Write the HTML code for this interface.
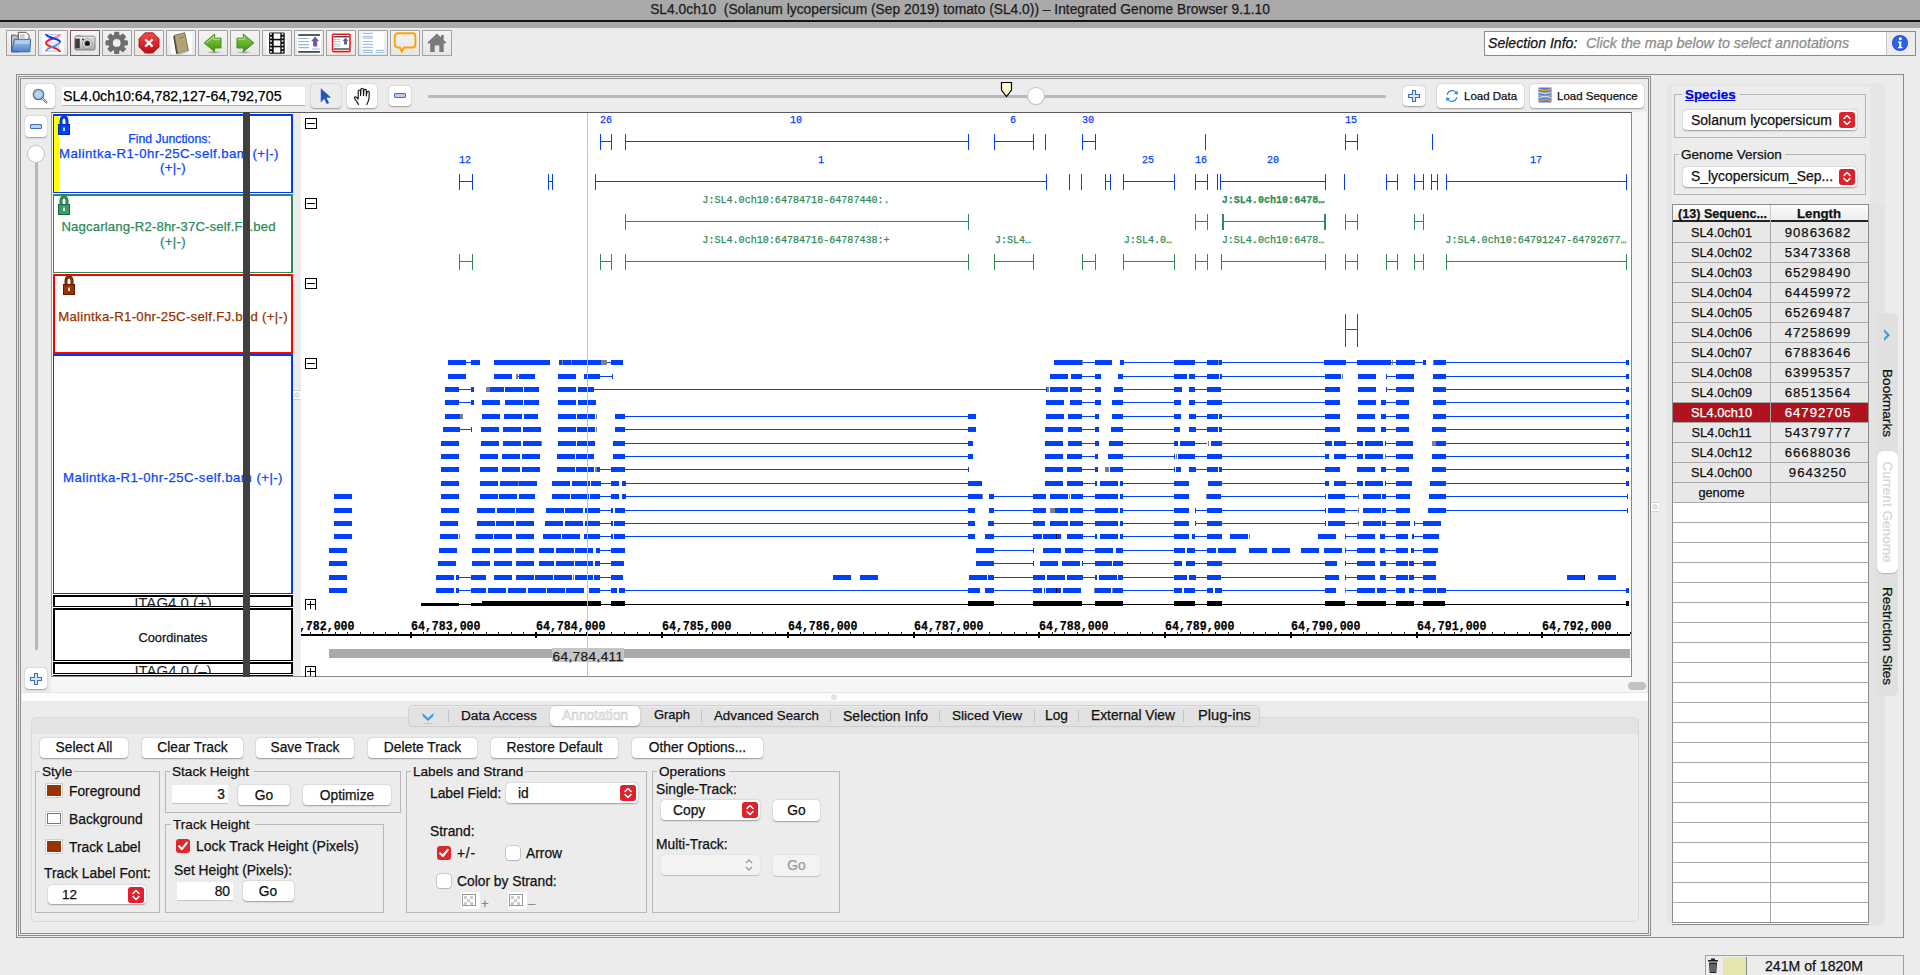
<!DOCTYPE html><html><head><meta charset="utf-8"><style>
html,body{margin:0;padding:0}
body{width:1920px;height:975px;overflow:hidden;position:relative;background:#ececec;font-family:"Liberation Sans",sans-serif}
.a{position:absolute}
.t{position:absolute;white-space:pre;-webkit-text-stroke:0.25px currentColor}
</style></head><body>
<div class="a" style="left:0px;top:0px;width:1920px;height:20px;background:#a9a9a9"></div>
<div class="a" style="left:0px;top:20px;width:1920px;height:2px;background:#121212"></div>
<div class="a" style="left:0px;top:22px;width:1920px;height:6px;background:#a9a9a9"></div>
<div class="t" style="left:960px;top:2.77px;font-size:13.8px;line-height:13.8px;color:#1c1c1c;transform:translateX(-50%);">SL4.0ch10  (Solanum lycopersicum (Sep 2019) tomato (SL4.0)) – Integrated Genome Browser 9.1.10</div>
<div class="a" style="left:6px;top:30px;width:30px;height:26px;border:1px solid #a3a3a3;box-sizing:border-box;background:linear-gradient(#f4f4f4,#e6e6e6);"></div>
<div class="a" style="left:38px;top:30px;width:30px;height:26px;border:1px solid #a3a3a3;box-sizing:border-box;background:linear-gradient(#f4f4f4,#e6e6e6);"></div>
<div class="a" style="left:70px;top:30px;width:30px;height:26px;border:1px solid #7d5c5c;box-sizing:border-box;background:linear-gradient(#f4f4f4,#e6e6e6);"></div>
<div class="a" style="left:102px;top:30px;width:30px;height:26px;border:1px solid #a3a3a3;box-sizing:border-box;background:linear-gradient(#f4f4f4,#e6e6e6);"></div>
<div class="a" style="left:134px;top:30px;width:30px;height:26px;border:1px solid #a3a3a3;box-sizing:border-box;background:linear-gradient(#f4f4f4,#e6e6e6);"></div>
<div class="a" style="left:166px;top:30px;width:30px;height:26px;border:1px solid #a3a3a3;box-sizing:border-box;background:linear-gradient(#f4f4f4,#e6e6e6);"></div>
<div class="a" style="left:198px;top:30px;width:30px;height:26px;border:1px solid #a3a3a3;box-sizing:border-box;background:linear-gradient(#f4f4f4,#e6e6e6);"></div>
<div class="a" style="left:230px;top:30px;width:30px;height:26px;border:1px solid #a3a3a3;box-sizing:border-box;background:linear-gradient(#f4f4f4,#e6e6e6);"></div>
<div class="a" style="left:262px;top:30px;width:30px;height:26px;border:1px solid #a3a3a3;box-sizing:border-box;background:linear-gradient(#f4f4f4,#e6e6e6);"></div>
<div class="a" style="left:294px;top:30px;width:30px;height:26px;border:1px solid #a3a3a3;box-sizing:border-box;background:linear-gradient(#f4f4f4,#e6e6e6);"></div>
<div class="a" style="left:326px;top:30px;width:30px;height:26px;border:1px solid #a3a3a3;box-sizing:border-box;background:linear-gradient(#f4f4f4,#e6e6e6);"></div>
<div class="a" style="left:358px;top:30px;width:30px;height:26px;border:1px solid #a3a3a3;box-sizing:border-box;background:linear-gradient(#f4f4f4,#e6e6e6);"></div>
<div class="a" style="left:390px;top:30px;width:30px;height:26px;border:1px solid #a3a3a3;box-sizing:border-box;background:linear-gradient(#f4f4f4,#e6e6e6);"></div>
<div class="a" style="left:422px;top:30px;width:30px;height:26px;border:1px solid #a3a3a3;box-sizing:border-box;background:linear-gradient(#f4f4f4,#e6e6e6);"></div>
<svg class="a" style="left:6px;top:30px" width="30" height="26" viewBox="0 0 30 26"><defs><linearGradient id="gF" x1="0" y1="0" x2="0" y2="1"><stop offset="0" stop-color="#a9c8ee"/><stop offset="1" stop-color="#4e82c6"/></linearGradient><linearGradient id="gS" x1="0" y1="0" x2="0" y2="1"><stop offset="0" stop-color="#ef4b4b"/><stop offset="1" stop-color="#c00d12"/></linearGradient><linearGradient id="gA" x1="0" y1="0" x2="0" y2="1"><stop offset="0" stop-color="#8fd14f"/><stop offset="1" stop-color="#3f9410"/></linearGradient><linearGradient id="gC" x1="0" y1="0" x2="0" y2="1"><stop offset="0" stop-color="#f2f2f2"/><stop offset="1" stop-color="#a9a9a9"/></linearGradient><radialGradient id="gSh" cx="0.5" cy="0.5" r="0.5"><stop offset="0" stop-color="rgba(0,0,0,0.35)"/><stop offset="1" stop-color="rgba(0,0,0,0)"/></radialGradient></defs><path d="M5.5 5h4l1 1h2.5v15.8h-7.5z" fill="#bdbdbd" stroke="#555" stroke-width="0.9"/><path d="M12.3 2.3h7.7l3 3v9h-10.7z" fill="#fbfbfb" stroke="#444" stroke-width="0.9"/><path d="M14.3 5.2h4.5M14.3 7.2h4.5" stroke="#8a8a8a" stroke-width="0.8"/><path d="M8.3 9.3h16.4l-0.9 12.5h-18.2z" fill="url(#gF)" stroke="#2e5e9f" stroke-width="0.9"/><path d="M9.2 10.5h14.3l-0.3 3.5h-14.4z" fill="#c4dbf5" opacity="0.6"/></svg>
<svg class="a" style="left:38px;top:30px" width="30" height="26" viewBox="0 0 30 26"><rect x="4.3" y="2.1" width="21.6" height="21.6" fill="#fff"/><path d="M9 4.5h13M9.5 8.6h12M9 13h13M9.5 17.2h12M9 21.2h13" stroke="#b8d0f2" stroke-width="1.2"/><path d="M22 4 C22 8,8 9,8 13 C8 17,22 17.5,22 22" stroke="#ff1a1a" stroke-width="2.1" fill="none"/><path d="M22 4 C22 6,18 7.5,15 8.5" stroke="#f4a0a0" stroke-width="2.1" fill="none"/><path d="M8 4 C8 8,22 8.5,22 12" stroke="#1030ff" stroke-width="2.1" fill="none"/><path d="M22 12 C22 16,8 17,8 21.5" stroke="#5f86ee" stroke-width="1.8" fill="none"/></svg>
<svg class="a" style="left:70px;top:30px" width="30" height="26" viewBox="0 0 30 26"><rect x="5.8" y="4.8" width="5" height="2" rx="0.8" fill="#bbb"/><rect x="4.8" y="6.2" width="20.2" height="13.8" rx="1.6" fill="url(#gC)" stroke="#6a6a6a" stroke-width="0.8"/><rect x="5.2" y="8.6" width="4.6" height="9.6" fill="#3e3e3e"/><circle cx="17.3" cy="13.4" r="4.8" fill="#e8e8e8" stroke="#8a8a8a" stroke-width="0.8"/><circle cx="17.3" cy="13.4" r="2.9" fill="#444"/><circle cx="17.3" cy="13.4" r="1.6" fill="#0a0a0a"/><circle cx="12.9" cy="9.4" r="0.9" fill="#222"/><rect x="20.6" y="7.8" width="3.2" height="2" fill="#bcd2ea"/></svg>
<svg class="a" style="left:102px;top:30px" width="30" height="26" viewBox="0 0 30 26"><g transform="translate(14.7 12.9)" fill="#6e6e6e"><rect x="-2.6" y="-11.2" width="5.2" height="6" rx="1.2" transform="rotate(0)"/><rect x="-2.6" y="-11.2" width="5.2" height="6" rx="1.2" transform="rotate(45)"/><rect x="-2.6" y="-11.2" width="5.2" height="6" rx="1.2" transform="rotate(90)"/><rect x="-2.6" y="-11.2" width="5.2" height="6" rx="1.2" transform="rotate(135)"/><rect x="-2.6" y="-11.2" width="5.2" height="6" rx="1.2" transform="rotate(180)"/><rect x="-2.6" y="-11.2" width="5.2" height="6" rx="1.2" transform="rotate(225)"/><rect x="-2.6" y="-11.2" width="5.2" height="6" rx="1.2" transform="rotate(270)"/><rect x="-2.6" y="-11.2" width="5.2" height="6" rx="1.2" transform="rotate(315)"/><circle r="8.4"/><circle r="3.9" fill="#efefef"/></g></svg>
<svg class="a" style="left:134px;top:30px" width="30" height="26" viewBox="0 0 30 26"><ellipse cx="15" cy="23.3" rx="7" ry="1.4" fill="url(#gSh)"/><path d="M10.9 2.8h8.2l5.9 5.9v8.2l-5.9 5.9h-8.2l-5.9-5.9v-8.2z" fill="url(#gS)" stroke="#a10a0a" stroke-width="0.8"/><path d="M11.2 9.2l7.4 7.4M18.6 9.2l-7.4 7.4" stroke="#fff" stroke-width="2.3"/></svg>
<svg class="a" style="left:166px;top:30px" width="30" height="26" viewBox="0 0 30 26"><rect x="4.6" y="2.1" width="21.3" height="21.6" fill="#fff"/><path d="M8.3 5.3l10.5-2.6 3.6 17.6-10.8 3.3z" fill="#b3a274" stroke="#5e5030" stroke-width="0.7"/><path d="M8.3 5.3l3.3 18.3-1.4 0.3-3-17.5z" fill="#4a4028"/><path d="M11.6 23.6l10.8-3.3 0.3 1.2-10.8 3.1z" fill="#eee" stroke="#777" stroke-width="0.5"/><path d="M13.5 8l4-1" stroke="#6e6040" stroke-width="0.8"/></svg>
<svg class="a" style="left:198px;top:30px" width="30" height="26" viewBox="0 0 30 26"><ellipse cx="16" cy="22.3" rx="8" ry="1.6" fill="url(#gSh)"/><path d="M6.1 12.9l10.5-8.8v4.1h6.4v9.8h-6.4v3.7z" fill="url(#gA)" stroke="#3a860c" stroke-width="0.9"/><path d="M8.2 12.9l7.4-6.2v2.6h6.4" stroke="#c6f29a" stroke-width="0.8" fill="none"/></svg>
<svg class="a" style="left:230px;top:30px" width="30" height="26" viewBox="0 0 30 26"><ellipse cx="14" cy="22.3" rx="8" ry="1.6" fill="url(#gSh)"/><path d="M23.9 12.9l-10.5-8.8v4.1h-6.4v9.8h6.4v3.7z" fill="url(#gA)" stroke="#3a860c" stroke-width="0.9"/><path d="M7.9 9.3h6.4v-2.6" stroke="#c6f29a" stroke-width="0.8" fill="none"/></svg>
<svg class="a" style="left:262px;top:30px" width="30" height="26" viewBox="0 0 30 26"><rect x="4.7" y="2.1" width="20.3" height="21.6" fill="#fff"/><rect x="7.1" y="2.4" width="15.6" height="21.3" rx="1" fill="#111"/><rect x="8.1" y="3.2" width="1.7" height="1.6" fill="#fff"/><rect x="19.7" y="3.2" width="1.7" height="1.6" fill="#fff"/><rect x="8.1" y="6.8" width="1.7" height="1.6" fill="#fff"/><rect x="19.7" y="6.8" width="1.7" height="1.6" fill="#fff"/><rect x="8.1" y="10.3" width="1.7" height="1.6" fill="#fff"/><rect x="19.7" y="10.3" width="1.7" height="1.6" fill="#fff"/><rect x="8.1" y="13.9" width="1.7" height="1.6" fill="#fff"/><rect x="19.7" y="13.9" width="1.7" height="1.6" fill="#fff"/><rect x="8.1" y="17.5" width="1.7" height="1.6" fill="#fff"/><rect x="19.7" y="17.5" width="1.7" height="1.6" fill="#fff"/><rect x="8.1" y="21.0" width="1.7" height="1.6" fill="#fff"/><rect x="19.7" y="21.0" width="1.7" height="1.6" fill="#fff"/><rect x="11.7" y="3.4" width="6.6" height="5.4" fill="#fafafa"/><rect x="11.7" y="10.4" width="6.6" height="5.4" fill="#fafafa"/><rect x="11.7" y="17.3" width="6.6" height="5.4" fill="#fafafa"/></svg>
<svg class="a" style="left:294px;top:30px" width="30" height="26" viewBox="0 0 30 26"><rect x="3" y="2.1" width="24" height="21.6" fill="#fff"/><rect x="4.2" y="4.1" width="21.7" height="1.8" fill="#4a4a4a"/><rect x="4.2" y="21" width="21.7" height="1.8" fill="#4a4a4a"/><path d="M4.2 8.5h10.8M4.2 11.5h10.8M4.2 14.6h10.8M4.2 17.6h10.8" stroke="#8fb4e0" stroke-width="1.1"/><path d="M21.1 6.4l4.1 4.8h-2v5.2h-4.1v-5.2h-2z" fill="#6f5aa0"/><rect x="17.8" y="18" width="8.1" height="2" fill="#c6dbf3"/></svg>
<svg class="a" style="left:326px;top:30px" width="30" height="26" viewBox="0 0 30 26"><rect x="4.5" y="2.1" width="22" height="21.6" fill="#fff"/><rect x="6.5" y="4.2" width="17.5" height="17.4" rx="1" fill="#fff" stroke="#ff1010" stroke-width="1.6"/><rect x="7.5" y="6" width="15.5" height="1.4" fill="#3e4a4e"/><rect x="7.5" y="18.3" width="15.5" height="1.4" fill="#3e4a4e"/><path d="M7.5 9.5h7M7.5 11.5h7M7.5 14h7M7.5 16h7" stroke="#a8c6ea" stroke-width="1.1"/><path d="M19.5 7.6l3 3.3h-1.5v3.6h-3v-3.6h-1.5z" fill="#6f5aa0"/></svg>
<svg class="a" style="left:358px;top:30px" width="30" height="26" viewBox="0 0 30 26"><rect x="3.5" y="2.1" width="22.4" height="21.6" fill="#fff"/><path d="M4.5 3.4h10.5M4.5 6.5h10.5M4.5 8.2h10.5M4.5 11.5h10.5M4.5 14.3h10.5M4.5 17.3h10.5M4.5 20.3h10.5M4.5 22.4h10.5M17.7 20.3h8.2M17.7 22.4h8.2" stroke="#a5c3e8" stroke-width="1.2"/></svg>
<svg class="a" style="left:390px;top:30px" width="30" height="26" viewBox="0 0 30 26"><path d="M7.6 3.3h15a2.8 2.8 0 0 1 2.8 2.8v8.6a2.8 2.8 0 0 1-2.8 2.8h-8.6l-2.4 4.3-1.5-4.3h-2.5a2.8 2.8 0 0 1-2.8-2.8v-8.6a2.8 2.8 0 0 1 2.8-2.8z" fill="none" stroke="#ffa200" stroke-width="1.9" stroke-linejoin="round"/></svg>
<svg class="a" style="left:422px;top:30px" width="30" height="26" viewBox="0 0 30 26"><path d="M14.9 3.6l9.4 8.9-1.5 1.4-7.9-7.4-7.9 7.4-1.5-1.4z" fill="#777"/><rect x="19.1" y="5" width="2.6" height="4.5" fill="#777"/><path d="M8.2 12.6l6.7-6.3 6.8 6.3v9.4h-4.4v-6.6h-4.6v6.6h-4.5z" fill="#7a7a7a"/></svg>
<div class="a" style="left:1484px;top:31px;width:432px;height:25px;border:1px solid #8a8a8a;box-sizing:border-box;background:#fff"></div>
<div class="a" style="left:1886px;top:32px;width:29px;height:23px;background:#ececec;border-left:1px solid #c8c8c8;box-sizing:border-box"></div>
<div class="t" style="left:1488px;top:36.02px;font-size:14.1px;line-height:14.1px;color:#111;font-style:italic;">Selection Info:</div>
<div class="t" style="left:1586px;top:35.84px;font-size:14.3px;line-height:14.3px;color:#8c8c8c;font-style:italic;">Click the map below to select annotations</div>
<svg class="a" style="left:1891px;top:34px" width="18" height="18" viewBox="0 0 18 18"><circle cx="9" cy="9" r="8" fill="#1b4fd1"/><circle cx="9" cy="9" r="7" fill="#2a62e8"/><circle cx="9.3" cy="4.8" r="1.5" fill="#fff"/><path d="M7 7.5h3.3v5.5h1.2v1.3h-4.5v-1.3h1.2v-4.2h-1.2z" fill="#fff"/></svg>
<div class="a" style="left:16px;top:74px;width:1888px;height:864px;border:1px solid #8c8c8c;box-sizing:border-box"></div>
<div class="a" style="left:18px;top:76px;width:1633px;height:860px;border:1px solid #8c8c8c;box-sizing:border-box"></div>
<div class="a" style="left:20px;top:78px;width:1629px;height:856px;border:1px solid #8c8c8c;box-sizing:border-box"></div>
<div class="a" style="left:25px;top:84px;width:30px;height:24px;background:#fff;border-radius:4px;box-shadow:0 0.5px 1.5px rgba(0,0,0,0.35);"></div>
<svg class="a" style="left:31px;top:87px" width="18" height="18" viewBox="0 0 18 18"><circle cx="7.5" cy="7.5" r="5.3" fill="#b9d3f2" stroke="#666" stroke-width="1.1"/><circle cx="7.5" cy="7.5" r="4" fill="none" stroke="#7aa7e0" stroke-width="0.8"/><path d="M11.3 11.3l4 4" stroke="#666" stroke-width="2.2" stroke-linecap="round"/><path d="M11.3 11.3l4 4" stroke="#eee" stroke-width="1" stroke-linecap="round"/></svg>
<div class="a" style="left:62px;top:87px;width:243px;height:19px;background:#fff;border-bottom:1px solid #b0b0b0;box-sizing:border-box"></div>
<div class="t" style="left:63px;top:88.93px;font-size:14.2px;line-height:14.2px;color:#000;">SL4.0ch10:64,782,127-64,792,705</div>
<div class="a" style="left:311px;top:84px;width:30px;height:24px;background:#ececec;border-radius:4px;box-shadow:0 0.5px 1.5px rgba(0,0,0,0.35);"></div>
<svg class="a" style="left:318px;top:87px" width="16" height="18" viewBox="0 0 16 18"><path d="M3 1.5v13.5l3.2-3.3 2.6 5.3 2.3-1.1-2.6-5.2 4.5-0.1z" fill="#2452b5"/><path d="M3 1.5v13.5l3.2-3.3" fill="none" stroke="#4a7ad8" stroke-width="0.6"/></svg>
<div class="a" style="left:347px;top:84px;width:30px;height:24px;background:#fff;border-radius:4px;box-shadow:0 0.5px 1.5px rgba(0,0,0,0.35);"></div>
<svg class="a" style="left:353px;top:86px" width="18" height="20" viewBox="0 0 18 20"><path d="M5.5 18.5 C4.5 16.5,2.5 14,1.6 12.2 C1.1 11,2.3 10.3,3.3 11.2 L5.2 13 L5.2 5.2 C5.2 3.6,7.6 3.6,7.6 5.2 L7.6 9.5 L7.9 3.4 C7.9 1.8,10.4 1.8,10.4 3.4 L10.5 9.5 L10.9 4.5 C11 2.9,13.4 3,13.3 4.6 L13.3 10 L13.9 6.4 C14.1 4.9,16.4 5.1,16.3 6.6 L16 12.5 C15.8 15,14.8 16.8,13.8 18.5" fill="#fff" stroke="#111" stroke-width="1.15" stroke-linecap="round" stroke-linejoin="round"/></svg>
<div class="a" style="left:389px;top:86px;width:22px;height:20px;background:#fff;border-radius:4px;box-shadow:0 0.5px 1.5px rgba(0,0,0,0.35);"></div>
<div class="a" style="left:394px;top:93px;width:12px;height:5px;background:#b9d0ee;border:1px solid #3d6cb8;box-sizing:border-box;border-radius:1px"></div>
<div class="a" style="left:428px;top:95px;width:958px;height:3px;background:#b8b8b8;border-radius:1.5px"></div>
<svg class="a" style="left:1000px;top:81px" width="14" height="17" viewBox="0 0 14 17"><path d="M1.5 1.5h10v7.5l-5 6.5-5-6.5z" fill="#fdf8cf" stroke="#000" stroke-width="1.2"/></svg>
<div class="a" style="left:1028px;top:88px;width:16px;height:16px;background:#fff;border-radius:50%;box-shadow:0 0 0 1px #c4c4c4, 0 1px 1px rgba(0,0,0,0.15)"></div>
<div class="a" style="left:1403px;top:86px;width:22px;height:20px;background:#fff;border-radius:4px;box-shadow:0 0.5px 1.5px rgba(0,0,0,0.35);"></div>
<svg class="a" style="left:1407px;top:89px" width="14" height="14" viewBox="0 0 14 14"><path d="M5.5 1.5h3v4h4v3h-4v4h-3v-4h-4v-3h4z" fill="#dce8f7" stroke="#3d6cb8" stroke-width="1.1"/></svg>
<div class="a" style="left:1437px;top:84px;width:87px;height:24px;background:#fff;border-radius:4px;box-shadow:0 0.5px 1.5px rgba(0,0,0,0.35);"></div>
<svg class="a" style="left:1445px;top:88px" width="14" height="16" viewBox="0 0 14 16"><path d="M3 7 C3 3.5,8 2,10.5 4.5 L9 6 L13 6.5 L12.5 2.5 L11.3 3.7 C8 0.5,2 2,1.8 7z" fill="#2f8ad8"/><path d="M11 9 C11 12.5,6 14,3.5 11.5 L5 10 L1 9.5 L1.5 13.5 L2.7 12.3 C6 15.5,12 14,12.2 9z" fill="#2f8ad8"/></svg>
<div class="t" style="left:1464px;top:91.22px;font-size:11.5px;line-height:11.5px;color:#111;">Load Data</div>
<div class="a" style="left:1530px;top:84px;width:114px;height:24px;background:#fff;border-radius:4px;box-shadow:0 0.5px 1.5px rgba(0,0,0,0.35);"></div>
<svg class="a" style="left:1538px;top:87px" width="14" height="16" viewBox="0 0 14 16"><rect x="0.5" y="0.5" width="13" height="15" fill="#4c7fd0"/><path d="M1 2 C5 4,9 4,13 2 M1 8 C5 10,9 10,13 8 M1 14 C5 12,9 12,13 14" stroke="#f39a1c" stroke-width="1.6" fill="none"/><path d="M1 5 C5 7,9 7,13 5 M1 11 C5 9,9 9,13 11" stroke="#cfe0f7" stroke-width="1.3" fill="none"/></svg>
<div class="t" style="left:1557px;top:91.22px;font-size:11.5px;line-height:11.5px;color:#111;">Load Sequence</div>
<div class="a" style="left:25px;top:116px;width:22px;height:21px;background:#fff;border-radius:4px;box-shadow:0 0.5px 1.5px rgba(0,0,0,0.35);"></div>
<div class="a" style="left:30px;top:124px;width:12px;height:5px;background:#b9d0ee;border:1px solid #3d6cb8;box-sizing:border-box;border-radius:1px"></div>
<div class="a" style="left:35px;top:160px;width:3px;height:490px;background:#b8b8b8;border-radius:1px"></div>
<div class="a" style="left:28px;top:146px;width:16px;height:16px;background:#fff;border-radius:50%;box-shadow:0 0 0 1px #c4c4c4"></div>
<div class="a" style="left:25px;top:668px;width:22px;height:21px;background:#fff;border-radius:4px;box-shadow:0 0.5px 1.5px rgba(0,0,0,0.35);"></div>
<svg class="a" style="left:29px;top:672px" width="14" height="14" viewBox="0 0 14 14"><path d="M5.5 1.5h3v4h4v3h-4v4h-3v-4h-4v-3h4z" fill="#dce8f7" stroke="#3d6cb8" stroke-width="1.1"/></svg>
<div class="a" style="left:51px;top:112px;width:1581px;height:565px;background:#fff;border-top:1px solid #5c5c5c;border-left:1px solid #9a9a9a;border-right:1px solid #8a8a8a;border-bottom:1px solid #8a8a8a;box-sizing:border-box"></div>
<svg class="a" style="left:301px;top:113px" width="1330" height="563" viewBox="301 113 1330 563" shape-rendering="crispEdges"><path d="M600 134h1v16h-1zM611 134h1v16h-1zM600 141h11v1h-11zM625 134h1v16h-1zM968 134h1v16h-1zM625 141h343v1h-343zM994 134h1v16h-1zM1033 134h1v16h-1zM994 141h39v1h-39zM1045 134h1v16h-1zM1082 134h1v16h-1zM1095 134h1v16h-1zM1082 141h13v1h-13zM1205 134h1v16h-1zM1345 134h1v16h-1zM1357 134h1v16h-1zM1345 141h12v1h-12zM1432 134h1v16h-1zM459 174h1v16h-1zM472 174h1v16h-1zM459 181h13v1h-13zM548 174h1v16h-1zM552 174h1v16h-1zM548 181h4v1h-4zM595 174h1v16h-1zM1046 174h1v16h-1zM595 181h451v1h-451zM1069 174h1v16h-1zM1081 174h1v16h-1zM1105 174h1v16h-1zM1110 174h1v16h-1zM1105 181h5v1h-5zM1123 174h1v16h-1zM1174 174h1v16h-1zM1123 181h51v1h-51zM1195 174h1v16h-1zM1207 174h1v16h-1zM1195 181h12v1h-12zM1217 174h1v16h-1zM1220 174h1v16h-1zM1325 174h1v16h-1zM1220 181h105v1h-105zM1344 174h1v16h-1zM1386 174h1v16h-1zM1397 174h1v16h-1zM1386 181h11v1h-11zM1414 174h1v16h-1zM1423 174h1v16h-1zM1414 181h9v1h-9zM1431 174h1v16h-1zM1437 174h1v16h-1zM1431 181h6v1h-6zM1446 174h1v16h-1zM1626 174h1v16h-1zM1446 181h180v1h-180z" fill="#0040ff"/><path d="M625 214h1v16h-1zM968 214h1v16h-1zM625 221h343v1h-343zM1195 214h1v16h-1zM1207 214h1v16h-1zM1195 221h12v1h-12zM1414 214h1v16h-1zM1423 214h1v16h-1zM1414 221h9v1h-9zM1345 214h1v16h-1zM1357 214h1v16h-1zM1345 221h12v1h-12zM459 254h1v16h-1zM472 254h1v16h-1zM459 261h13v1h-13zM600 254h1v16h-1zM611 254h1v16h-1zM600 261h11v1h-11zM625 254h1v16h-1zM968 254h1v16h-1zM625 261h343v1h-343zM994 254h1v16h-1zM1033 254h1v16h-1zM994 261h39v1h-39zM1082 254h1v16h-1zM1095 254h1v16h-1zM1082 261h13v1h-13zM1123 254h1v16h-1zM1174 254h1v16h-1zM1123 261h51v1h-51zM1195 254h1v16h-1zM1207 254h1v16h-1zM1195 261h12v1h-12zM1221 254h1v16h-1zM1325 254h1v16h-1zM1221 261h104v1h-104zM1345 254h1v16h-1zM1357 254h1v16h-1zM1345 261h12v1h-12zM1386 254h1v16h-1zM1397 254h1v16h-1zM1386 261h11v1h-11zM1414 254h1v16h-1zM1423 254h1v16h-1zM1414 261h9v1h-9zM1446 254h1v16h-1zM1626 254h1v16h-1zM1446 261h180v1h-180zM1222 214h2v16h-2zM1324 214h2v16h-2zM1222 221h103v1h-103z" fill="#2e8b57"/><path d="M1345 314h1v33h-1zM1357 314h1v33h-1zM1345 329h12v1h-12z" fill="#993300"/><path d="M448 360h18v5h-18zM466 362h5v1h-5zM471 360h9v5h-9zM494 360h56v5h-56zM559 360h42v5h-42zM607 362h4v1h-4zM611 360h12v5h-12zM1054 360h28v5h-28zM1082 362h13v1h-13zM1095 360h17v5h-17zM1120 360h4v5h-4zM1124 362h50v1h-50zM1174 360h21v5h-21zM1195 362h12v1h-12zM1207 360h15v5h-15zM1222 362h102v1h-102zM1324 360h22v5h-22zM1346 362h11v1h-11zM1357 360h34v5h-34zM1391 362h5v1h-5zM1396 360h19v5h-19zM1415 362h8v1h-8zM1423 360h3v5h-3zM1433 360h13v5h-13zM1446 362h180v1h-180zM1626 360h3v5h-3z" fill="#0040ff"/>
<path d="M601 360h6v5h-6zM562 360h1v5h-1zM571 360h1v5h-1zM1082 360h1v5h-1zM1218 360h1v5h-1zM1392 360h1v5h-1zM1433 360h1v5h-1z" fill="#808080"/>
<path d="M448 374h18v5h-18zM494 374h18v5h-18zM518 376h1v1h-1zM519 374h16v5h-16zM558 374h18v5h-18zM584 374h16v5h-16zM600 376h12v1h-12zM612 374h1v5h-1zM1050 374h18v5h-18zM1071 374h11v5h-11zM1082 376h13v1h-13zM1095 374h6v5h-6zM1118 374h5v5h-5zM1123 376h51v1h-51zM1174 374h13v5h-13zM1189 374h6v5h-6zM1195 376h12v1h-12zM1207 374h12v5h-12zM1220 374h2v5h-2zM1222 376h103v1h-103zM1325 374h16v5h-16zM1358 374h18v5h-18zM1386 374h1v5h-1zM1386 376h10v1h-10zM1396 374h18v5h-18zM1433 374h13v5h-13zM1446 376h180v1h-180zM1626 374h3v5h-3z" fill="#0040ff"/>
<path d="M516 374h2v5h-2zM1342 374h1v5h-1z" fill="#808080"/>
<path d="M445 387h14v5h-14zM459 389h12v1h-12zM471 387h3v5h-3zM490 387h14v5h-14zM505 387h18v5h-18zM524 387h15v5h-15zM558 387h18v5h-18zM578 387h16v5h-16zM594 389h452v1h-452zM1046 387h1v5h-1zM1050 387h18v5h-18zM1070 387h12v5h-12zM1082 389h13v1h-13zM1095 387h6v5h-6zM1114 387h9v5h-9zM1123 389h51v1h-51zM1174 387h8v5h-8zM1189 387h6v5h-6zM1195 389h12v1h-12zM1207 387h14v5h-14zM1221 389h104v1h-104zM1325 387h15v5h-15zM1358 387h18v5h-18zM1386 387h1v5h-1zM1386 389h10v1h-10zM1396 387h18v5h-18zM1433 387h13v5h-13zM1446 389h180v1h-180zM1626 387h3v5h-3z" fill="#0040ff"/>
<path d="M486 387h4v5h-4zM1047 387h1v5h-1zM1048 387h1v5h-1z" fill="#808080"/>
<path d="M445 400h14v5h-14zM459 402h12v1h-12zM471 400h3v5h-3zM482 400h18v5h-18zM505 400h18v5h-18zM524 400h15v5h-15zM558 400h18v5h-18zM578 400h18v5h-18zM1046 400h18v5h-18zM1070 400h12v5h-12zM1082 402h13v1h-13zM1095 400h6v5h-6zM1112 400h11v5h-11zM1123 402h51v1h-51zM1174 400h7v5h-7zM1189 400h6v5h-6zM1195 402h12v1h-12zM1207 400h15v5h-15zM1222 402h103v1h-103zM1325 400h15v5h-15zM1358 400h18v5h-18zM1381 400h5v5h-5zM1386 402h10v1h-10zM1396 400h13v5h-13zM1433 400h13v5h-13zM1446 402h180v1h-180zM1626 400h3v5h-3z" fill="#0040ff"/>
<path d="M445 414h15v5h-15zM482 414h18v5h-18zM504 414h18v5h-18zM524 414h14v5h-14zM558 414h18v5h-18zM577 414h18v5h-18zM615 414h10v5h-10zM625 416h343v1h-343zM968 414h8v5h-8zM1046 414h18v5h-18zM1068 414h14v5h-14zM1082 416h13v1h-13zM1095 414h4v5h-4zM1112 414h11v5h-11zM1123 416h51v1h-51zM1174 414h7v5h-7zM1189 414h7v5h-7zM1196 416h11v1h-11zM1207 414h11v5h-11zM1219 414h3v5h-3zM1222 416h103v1h-103zM1325 414h15v5h-15zM1357 414h18v5h-18zM1381 414h5v5h-5zM1386 416h10v1h-10zM1396 414h13v5h-13zM1433 414h13v5h-13zM1446 416h180v1h-180zM1626 414h3v5h-3z" fill="#0040ff"/>
<path d="M460 414h3v5h-3zM596 414h1v5h-1z" fill="#808080"/>
<path d="M443 427h17v5h-17zM460 429h11v1h-11zM471 427h1v5h-1zM481 427h18v5h-18zM503 427h18v5h-18zM523 427h18v5h-18zM558 427h18v5h-18zM577 427h18v5h-18zM615 427h10v5h-10zM625 429h343v1h-343zM968 427h8v5h-8zM1045 427h18v5h-18zM1068 427h14v5h-14zM1082 429h13v1h-13zM1095 427h4v5h-4zM1111 427h12v5h-12zM1123 429h51v1h-51zM1174 427h6v5h-6zM1189 427h7v5h-7zM1196 429h11v1h-11zM1207 427h11v5h-11zM1219 427h3v5h-3zM1222 429h103v1h-103zM1325 427h15v5h-15zM1357 427h18v5h-18zM1381 427h5v5h-5zM1386 429h10v1h-10zM1396 427h13v5h-13zM1432 427h14v5h-14zM1446 429h180v1h-180zM1626 427h3v5h-3z" fill="#0040ff"/>
<path d="M596 427h1v5h-1z" fill="#808080"/>
<path d="M441 441h18v5h-18zM481 441h18v5h-18zM503 441h18v5h-18zM523 441h18v5h-18zM558 441h18v5h-18zM577 441h18v5h-18zM613 441h12v5h-12zM625 443h343v1h-343zM968 441h5v5h-5zM1045 441h18v5h-18zM1068 441h14v5h-14zM1082 443h13v1h-13zM1095 441h4v5h-4zM1109 441h14v5h-14zM1123 443h51v1h-51zM1174 441h4v5h-4zM1180 441h15v5h-15zM1195 443h12v1h-12zM1211 441h11v5h-11zM1222 443h103v1h-103zM1325 441h7v5h-7zM1334 441h12v5h-12zM1346 443h11v1h-11zM1357 441h6v5h-6zM1365 441h18v5h-18zM1385 441h1v5h-1zM1385 443h11v1h-11zM1396 441h17v5h-17zM1436 441h10v5h-10zM1446 443h180v1h-180zM1626 441h3v5h-3z" fill="#0040ff"/>
<path d="M541 441h1v5h-1zM1208 441h1v5h-1zM1432 441h4v5h-4z" fill="#808080"/>
<path d="M441 454h18v5h-18zM480 454h18v5h-18zM502 454h18v5h-18zM522 454h18v5h-18zM557 454h18v5h-18zM576 454h18v5h-18zM613 454h12v5h-12zM625 456h343v1h-343zM968 454h5v5h-5zM1045 454h18v5h-18zM1067 454h15v5h-15zM1082 456h13v1h-13zM1095 454h3v5h-3zM1108 454h15v5h-15zM1123 456h51v1h-51zM1174 454h1v5h-1zM1178 454h17v5h-17zM1195 456h12v1h-12zM1207 454h15v5h-15zM1222 456h103v1h-103zM1325 454h4v5h-4zM1334 454h12v5h-12zM1346 456h11v1h-11zM1357 454h6v5h-6zM1365 454h18v5h-18zM1385 456h11v1h-11zM1396 454h17v5h-17zM1432 454h14v5h-14zM1446 456h180v1h-180zM1626 454h3v5h-3z" fill="#0040ff"/>
<path d="M1176 454h1v5h-1zM1385 454h1v5h-1z" fill="#808080"/>
<path d="M441 467h18v5h-18zM480 467h18v5h-18zM502 467h18v5h-18zM522 467h18v5h-18zM557 467h18v5h-18zM576 467h18v5h-18zM597 467h3v5h-3zM600 469h11v1h-11zM611 467h14v5h-14zM625 469h343v1h-343zM968 467h1v5h-1zM1045 467h18v5h-18zM1067 467h15v5h-15zM1082 469h13v1h-13zM1095 467h3v5h-3zM1110 467h13v5h-13zM1123 469h51v1h-51zM1174 467h1v5h-1zM1176 467h5v5h-5zM1189 467h7v5h-7zM1196 469h11v1h-11zM1207 467h11v5h-11zM1219 467h3v5h-3zM1222 469h103v1h-103zM1325 467h15v5h-15zM1357 467h18v5h-18zM1381 467h5v5h-5zM1386 469h10v1h-10zM1396 467h13v5h-13zM1432 467h14v5h-14zM1446 469h180v1h-180zM1626 467h3v5h-3z" fill="#0040ff"/>
<path d="M595 467h1v5h-1zM596 467h1v5h-1zM1105 467h4v5h-4z" fill="#808080"/>
<path d="M441 481h18v5h-18zM480 481h18v5h-18zM500 481h37v5h-37zM552 481h18v5h-18zM572 481h18v5h-18zM591 481h10v5h-10zM601 483h10v1h-10zM611 481h8v5h-8zM622 481h4v5h-4zM626 483h342v1h-342zM968 481h14v5h-14zM1045 481h18v5h-18zM1067 481h16v5h-16zM1083 483h12v1h-12zM1095 481h2v5h-2zM1100 481h18v5h-18zM1120 481h3v5h-3zM1123 483h51v1h-51zM1174 481h15v5h-15zM1208 481h14v5h-14zM1222 483h103v1h-103zM1325 481h4v5h-4zM1334 481h12v5h-12zM1346 483h11v1h-11zM1357 481h6v5h-6zM1365 481h18v5h-18zM1385 481h1v5h-1zM1385 483h11v1h-11zM1396 481h16v5h-16zM1430 481h16v5h-16zM1446 483h180v1h-180zM1626 481h3v5h-3z" fill="#0040ff"/>
<path d="M518 481h1v5h-1z" fill="#808080"/>
<path d="M334 494h18v5h-18zM441 494h18v5h-18zM480 494h18v5h-18zM499 494h18v5h-18zM519 494h16v5h-16zM552 494h18v5h-18zM571 494h18v5h-18zM590 494h10v5h-10zM600 496h11v1h-11zM611 494h8v5h-8zM622 494h4v5h-4zM626 496h342v1h-342zM968 494h14v5h-14zM989 494h5v5h-5zM994 496h39v1h-39zM1033 494h13v5h-13zM1050 494h18v5h-18zM1071 494h12v5h-12zM1083 496h12v1h-12zM1095 494h23v5h-23zM1120 494h3v5h-3zM1123 496h51v1h-51zM1174 494h15v5h-15zM1207 494h14v5h-14zM1221 496h104v1h-104zM1325 494h1v5h-1zM1328 494h17v5h-17zM1345 496h13v1h-13zM1363 494h18v5h-18zM1382 494h4v5h-4zM1386 496h10v1h-10zM1396 494h14v5h-14zM1429 494h17v5h-17zM1446 496h181v1h-181zM1627 494h1v5h-1z" fill="#0040ff"/>
<path d="M982 494h1v5h-1zM1069 494h1v5h-1zM1206 494h1v5h-1zM1358 494h1v5h-1z" fill="#808080"/>
<path d="M334 508h18v5h-18zM441 508h18v5h-18zM477 508h18v5h-18zM497 508h18v5h-18zM516 508h18v5h-18zM546 508h18v5h-18zM565 508h18v5h-18zM585 508h15v5h-15zM600 510h11v1h-11zM611 508h2v5h-2zM615 508h10v5h-10zM625 510h343v1h-343zM968 508h7v5h-7zM989 508h5v5h-5zM994 510h39v1h-39zM1033 508h13v5h-13zM1055 508h13v5h-13zM1070 508h13v5h-13zM1083 510h12v1h-12zM1095 508h23v5h-23zM1120 508h3v5h-3zM1123 510h51v1h-51zM1174 508h15v5h-15zM1195 508h1v5h-1zM1195 510h12v1h-12zM1207 508h15v5h-15zM1222 510h103v1h-103zM1325 508h1v5h-1zM1328 508h17v5h-17zM1345 510h13v1h-13zM1363 508h18v5h-18zM1382 508h4v5h-4zM1386 510h10v1h-10zM1396 508h14v5h-14zM1428 508h18v5h-18zM1446 510h181v1h-181zM1627 508h1v5h-1z" fill="#0040ff"/>
<path d="M1050 508h5v5h-5zM1358 508h1v5h-1z" fill="#808080"/>
<path d="M334 521h18v5h-18zM440 521h18v5h-18zM477 521h18v5h-18zM496 521h18v5h-18zM516 521h18v5h-18zM545 521h18v5h-18zM565 521h18v5h-18zM585 521h15v5h-15zM600 523h11v1h-11zM611 521h2v5h-2zM614 521h11v5h-11zM625 523h343v1h-343zM968 521h7v5h-7zM988 521h6v5h-6zM994 523h39v1h-39zM1033 521h12v5h-12zM1050 521h18v5h-18zM1070 521h13v5h-13zM1083 523h12v1h-12zM1095 521h23v5h-23zM1120 521h3v5h-3zM1123 523h51v1h-51zM1174 521h15v5h-15zM1195 521h1v5h-1zM1195 523h12v1h-12zM1207 521h15v5h-15zM1222 523h103v1h-103zM1325 521h1v5h-1zM1328 521h17v5h-17zM1345 523h13v1h-13zM1363 521h18v5h-18zM1382 521h4v5h-4zM1386 523h10v1h-10zM1396 521h14v5h-14zM1414 521h1v5h-1zM1414 523h9v1h-9zM1423 521h18v5h-18z" fill="#0040ff"/>
<path d="M1358 521h1v5h-1z" fill="#808080"/>
<path d="M334 534h18v5h-18zM440 534h18v5h-18zM476 534h17v5h-17zM494 534h18v5h-18zM516 534h18v5h-18zM543 534h18v5h-18zM562 534h18v5h-18zM584 534h16v5h-16zM600 536h11v1h-11zM611 534h2v5h-2zM614 534h11v5h-11zM625 536h343v1h-343zM968 534h7v5h-7zM985 534h9v5h-9zM994 536h39v1h-39zM1033 534h9v5h-9zM1043 534h18v5h-18zM1067 534h16v5h-16zM1083 536h12v1h-12zM1095 534h2v5h-2zM1100 534h18v5h-18zM1120 534h3v5h-3zM1123 536h51v1h-51zM1174 534h15v5h-15zM1192 534h3v5h-3zM1195 536h12v1h-12zM1207 534h15v5h-15zM1230 534h18v5h-18zM1318 534h18v5h-18zM1345 534h1v5h-1zM1345 536h12v1h-12zM1357 534h18v5h-18zM1380 534h5v5h-5zM1385 536h11v1h-11zM1396 534h12v5h-12zM1412 534h2v5h-2zM1414 536h9v1h-9zM1423 534h16v5h-16z" fill="#0040ff"/>
<path d="M459 534h1v5h-1zM475 534h1v5h-1zM1249 534h1v5h-1z" fill="#808080"/>
<path d="M1056 534h1v5h-1z" fill="#000"/>
<path d="M329 548h18v5h-18zM439 548h18v5h-18zM472 548h18v5h-18zM494 548h18v5h-18zM516 548h18v5h-18zM539 548h15v5h-15zM556 548h18v5h-18zM575 548h18v5h-18zM596 548h4v5h-4zM600 550h11v1h-11zM611 548h14v5h-14zM976 548h18v5h-18zM994 550h39v1h-39zM1033 548h1v5h-1zM1043 548h18v5h-18zM1065 548h18v5h-18zM1083 550h12v1h-12zM1095 548h18v5h-18zM1116 548h7v5h-7zM1123 550h51v1h-51zM1174 548h11v5h-11zM1187 548h8v5h-8zM1195 550h12v1h-12zM1207 548h9v5h-9zM1218 548h18v5h-18zM1249 548h18v5h-18zM1272 548h18v5h-18zM1301 548h18v5h-18zM1324 548h18v5h-18zM1345 548h1v5h-1zM1345 550h12v1h-12zM1357 548h18v5h-18zM1380 548h5v5h-5zM1385 550h11v1h-11zM1396 548h12v5h-12zM1411 548h3v5h-3zM1414 550h9v1h-9zM1423 548h15v5h-15z" fill="#0040ff"/>
<path d="M329 561h18v5h-18zM438 561h18v5h-18zM472 561h18v5h-18zM494 561h18v5h-18zM516 561h18v5h-18zM539 561h15v5h-15zM556 561h18v5h-18zM575 561h18v5h-18zM595 561h5v5h-5zM600 563h11v1h-11zM611 561h13v5h-13zM976 561h18v5h-18zM994 563h39v1h-39zM1033 561h1v5h-1zM1040 561h18v5h-18zM1062 561h18v5h-18zM1082 561h1v5h-1zM1082 563h13v1h-13zM1095 561h17v5h-17zM1113 561h10v5h-10zM1123 563h51v1h-51zM1174 561h8v5h-8zM1186 561h9v5h-9zM1195 563h12v1h-12zM1207 561h15v5h-15zM1222 563h103v1h-103zM1325 561h12v5h-12zM1345 561h1v5h-1zM1345 563h12v1h-12zM1357 561h18v5h-18zM1380 561h6v5h-6zM1386 563h10v1h-10zM1396 561h12v5h-12zM1409 561h5v5h-5zM1414 563h9v1h-9zM1423 561h13v5h-13z" fill="#0040ff"/>
<path d="M329 575h18v5h-18zM436 575h18v5h-18zM456 575h3v5h-3zM459 577h12v1h-12zM471 575h15v5h-15zM494 575h18v5h-18zM516 575h18v5h-18zM535 575h18v5h-18zM554 575h18v5h-18zM575 575h18v5h-18zM594 575h6v5h-6zM600 577h11v1h-11zM611 575h12v5h-12zM833 575h18v5h-18zM860 575h18v5h-18zM969 575h18v5h-18zM988 575h6v5h-6zM994 577h39v1h-39zM1033 575h12v5h-12zM1047 575h18v5h-18zM1067 575h16v5h-16zM1083 577h12v1h-12zM1095 575h2v5h-2zM1099 575h18v5h-18zM1118 575h5v5h-5zM1123 577h51v1h-51zM1174 575h13v5h-13zM1189 575h7v5h-7zM1196 577h11v1h-11zM1207 575h14v5h-14zM1221 577h104v1h-104zM1325 575h14v5h-14zM1345 575h1v5h-1zM1345 577h12v1h-12zM1357 575h18v5h-18zM1380 575h6v5h-6zM1386 577h10v1h-10zM1396 575h12v5h-12zM1409 575h5v5h-5zM1414 577h9v1h-9zM1423 575h13v5h-13zM1567 575h18v5h-18zM1598 575h18v5h-18z" fill="#0040ff"/>
<path d="M573 575h1v5h-1z" fill="#808080"/>
<path d="M1584 575h1v5h-1z" fill="#000"/>
<path d="M329 588h18v5h-18zM436 588h18v5h-18zM456 588h3v5h-3zM459 590h12v1h-12zM471 588h15v5h-15zM488 588h18v5h-18zM508 588h18v5h-18zM528 588h18v5h-18zM547 588h18v5h-18zM566 588h18v5h-18zM589 588h11v5h-11zM600 590h11v1h-11zM611 588h6v5h-6zM619 588h6v5h-6zM625 590h343v1h-343zM968 588h12v5h-12zM985 588h9v5h-9zM994 590h39v1h-39zM1033 588h9v5h-9zM1044 588h1v5h-1zM1046 588h15v5h-15zM1063 588h18v5h-18zM1095 588h16v5h-16zM1113 588h10v5h-10zM1123 590h51v1h-51zM1174 588h8v5h-8zM1184 588h11v5h-11zM1195 590h12v1h-12zM1207 588h6v5h-6zM1215 588h7v5h-7zM1222 590h103v1h-103zM1325 588h11v5h-11zM1345 590h12v1h-12zM1357 588h18v5h-18zM1377 588h9v5h-9zM1386 590h10v1h-10zM1396 588h9v5h-9zM1409 588h5v5h-5zM1414 590h9v1h-9zM1423 588h13v5h-13zM1437 588h9v5h-9zM1446 590h180v1h-180zM1626 588h3v5h-3z" fill="#0040ff"/>
<path d="M1094 588h1v5h-1zM1112 588h1v5h-1zM1345 588h1v5h-1z" fill="#808080"/>
<path d="M1056 588h1v5h-1z" fill="#000"/>
<path d="M421 603h38v3h-38zM459 604h12v1h-12zM471 603h11v3h-11zM482 601h119v5h-119zM601 604h10v1h-10zM611 601h14v5h-14zM625 604h343v1h-343zM968 601h26v5h-26zM994 604h39v1h-39zM1033 601h49v5h-49zM1082 604h13v1h-13zM1095 601h28v5h-28zM1123 604h51v1h-51zM1174 601h21v5h-21zM1195 604h12v1h-12zM1207 601h15v5h-15zM1222 604h103v1h-103zM1325 601h20v5h-20zM1345 604h12v1h-12zM1357 601h29v5h-29zM1386 604h10v1h-10zM1396 601h18v5h-18zM1414 604h9v1h-9zM1423 601h22v5h-22zM1445 604h181v1h-181zM1626 601h3v5h-3z" fill="#000"/><path d="M301 634h1329v2h-1329zM310 632h1v2h-1zM322 632h1v2h-1zM335 632h1v2h-1zM347 632h1v2h-1zM360 632h1v2h-1zM373 632h1v2h-1zM385 632h1v2h-1zM398 632h1v2h-1zM410 632h2v6h-2zM423 632h1v2h-1zM435 632h1v2h-1zM448 632h1v2h-1zM461 632h1v2h-1zM473 632h1v2h-1zM486 632h1v2h-1zM498 632h1v2h-1zM511 632h1v2h-1zM523 632h1v2h-1zM535 632h2v6h-2zM549 632h1v2h-1zM561 632h1v2h-1zM574 632h1v2h-1zM586 632h1v2h-1zM599 632h1v2h-1zM611 632h1v2h-1zM624 632h1v2h-1zM637 632h1v2h-1zM649 632h1v2h-1zM661 632h2v6h-2zM674 632h1v2h-1zM687 632h1v2h-1zM699 632h1v2h-1zM712 632h1v2h-1zM725 632h1v2h-1zM737 632h1v2h-1zM750 632h1v2h-1zM762 632h1v2h-1zM775 632h1v2h-1zM787 632h2v6h-2zM800 632h1v2h-1zM813 632h1v2h-1zM825 632h1v2h-1zM838 632h1v2h-1zM850 632h1v2h-1zM863 632h1v2h-1zM875 632h1v2h-1zM888 632h1v2h-1zM901 632h1v2h-1zM913 632h2v6h-2zM926 632h1v2h-1zM938 632h1v2h-1zM951 632h1v2h-1zM963 632h1v2h-1zM976 632h1v2h-1zM989 632h1v2h-1zM1001 632h1v2h-1zM1014 632h1v2h-1zM1026 632h1v2h-1zM1038 632h2v6h-2zM1052 632h1v2h-1zM1064 632h1v2h-1zM1077 632h1v2h-1zM1089 632h1v2h-1zM1102 632h1v2h-1zM1114 632h1v2h-1zM1127 632h1v2h-1zM1140 632h1v2h-1zM1152 632h1v2h-1zM1164 632h2v6h-2zM1177 632h1v2h-1zM1190 632h1v2h-1zM1202 632h1v2h-1zM1215 632h1v2h-1zM1228 632h1v2h-1zM1240 632h1v2h-1zM1253 632h1v2h-1zM1265 632h1v2h-1zM1278 632h1v2h-1zM1290 632h2v6h-2zM1303 632h1v2h-1zM1316 632h1v2h-1zM1328 632h1v2h-1zM1341 632h1v2h-1zM1353 632h1v2h-1zM1366 632h1v2h-1zM1378 632h1v2h-1zM1391 632h1v2h-1zM1404 632h1v2h-1zM1416 632h2v6h-2zM1429 632h1v2h-1zM1441 632h1v2h-1zM1454 632h1v2h-1zM1466 632h1v2h-1zM1479 632h1v2h-1zM1492 632h1v2h-1zM1504 632h1v2h-1zM1517 632h1v2h-1zM1529 632h1v2h-1zM1541 632h2v6h-2zM1554 632h1v2h-1zM1567 632h1v2h-1zM1580 632h1v2h-1zM1592 632h1v2h-1zM1605 632h1v2h-1zM1617 632h1v2h-1zM1630 632h1v2h-1z" fill="#000"/><rect x="329" y="649" width="1301" height="9" fill="#aaaaaa"/><rect x="552" y="648" width="72" height="14" fill="#c6c6c6"/><rect x="587" y="113" width="1" height="563" fill="#c4c4c4"/></svg>
<div class="a" style="left:305px;top:118px;width:12px;height:11px;border:1px solid #000;box-sizing:border-box;background:#fff"></div>
<div class="a" style="left:307px;top:123px;width:8px;height:1px;background:#000"></div>
<div class="a" style="left:305px;top:198px;width:12px;height:11px;border:1px solid #000;box-sizing:border-box;background:#fff"></div>
<div class="a" style="left:307px;top:203px;width:8px;height:1px;background:#000"></div>
<div class="a" style="left:305px;top:278px;width:12px;height:11px;border:1px solid #000;box-sizing:border-box;background:#fff"></div>
<div class="a" style="left:307px;top:283px;width:8px;height:1px;background:#000"></div>
<div class="a" style="left:305px;top:358px;width:12px;height:11px;border:1px solid #000;box-sizing:border-box;background:#fff"></div>
<div class="a" style="left:307px;top:363px;width:8px;height:1px;background:#000"></div>
<div class="a" style="left:305px;top:599px;width:11px;height:11px;border:1px solid #000;border-bottom:none;box-sizing:border-box;background:transparent"></div>
<div class="a" style="left:307px;top:604px;width:8px;height:1px;background:#000"></div>
<div class="a" style="left:310px;top:601px;width:1px;height:8px;background:#000"></div>
<div class="a" style="left:305px;top:666px;width:11px;height:11px;border:1px solid #000;border-bottom:none;box-sizing:border-box;background:transparent"></div>
<div class="a" style="left:307px;top:671px;width:8px;height:1px;background:#000"></div>
<div class="a" style="left:310px;top:668px;width:1px;height:8px;background:#000"></div>
<div class="t" style="left:606px;top:114.60px;font-size:11.2px;line-height:11.2px;color:#0040ff;font-family:'Liberation Mono';transform:translateX(-50%) scaleX(0.9);transform-origin:center top;">26</div>
<div class="t" style="left:796px;top:114.60px;font-size:11.2px;line-height:11.2px;color:#0040ff;font-family:'Liberation Mono';transform:translateX(-50%) scaleX(0.9);transform-origin:center top;">10</div>
<div class="t" style="left:1013px;top:114.60px;font-size:11.2px;line-height:11.2px;color:#0040ff;font-family:'Liberation Mono';transform:translateX(-50%) scaleX(0.9);transform-origin:center top;">6</div>
<div class="t" style="left:1088px;top:114.60px;font-size:11.2px;line-height:11.2px;color:#0040ff;font-family:'Liberation Mono';transform:translateX(-50%) scaleX(0.9);transform-origin:center top;">30</div>
<div class="t" style="left:1351px;top:114.60px;font-size:11.2px;line-height:11.2px;color:#0040ff;font-family:'Liberation Mono';transform:translateX(-50%) scaleX(0.9);transform-origin:center top;">15</div>
<div class="t" style="left:465px;top:154.60px;font-size:11.2px;line-height:11.2px;color:#0040ff;font-family:'Liberation Mono';transform:translateX(-50%) scaleX(0.9);transform-origin:center top;">12</div>
<div class="t" style="left:821px;top:154.60px;font-size:11.2px;line-height:11.2px;color:#0040ff;font-family:'Liberation Mono';transform:translateX(-50%) scaleX(0.9);transform-origin:center top;">1</div>
<div class="t" style="left:1148px;top:154.60px;font-size:11.2px;line-height:11.2px;color:#0040ff;font-family:'Liberation Mono';transform:translateX(-50%) scaleX(0.9);transform-origin:center top;">25</div>
<div class="t" style="left:1201px;top:154.60px;font-size:11.2px;line-height:11.2px;color:#0040ff;font-family:'Liberation Mono';transform:translateX(-50%) scaleX(0.9);transform-origin:center top;">16</div>
<div class="t" style="left:1273px;top:154.60px;font-size:11.2px;line-height:11.2px;color:#0040ff;font-family:'Liberation Mono';transform:translateX(-50%) scaleX(0.9);transform-origin:center top;">20</div>
<div class="t" style="left:1536px;top:154.60px;font-size:11.2px;line-height:11.2px;color:#0040ff;font-family:'Liberation Mono';transform:translateX(-50%) scaleX(0.9);transform-origin:center top;">17</div>
<div class="t" style="left:796px;top:194.60px;font-size:11.2px;line-height:11.2px;color:#2e8b57;font-family:'Liberation Mono';transform:translateX(-50%) scaleX(0.9);transform-origin:center top;">J:SL4.0ch10:64784718-64787440:.</div>
<div class="t" style="left:1273px;top:194.60px;font-size:11.2px;line-height:11.2px;color:#2e8b57;font-weight:700;font-family:'Liberation Mono';transform:translateX(-50%) scaleX(0.9);transform-origin:center top;">J:SL4.0ch10:6478…</div>
<div class="t" style="left:796px;top:234.60px;font-size:11.2px;line-height:11.2px;color:#2e8b57;font-family:'Liberation Mono';transform:translateX(-50%) scaleX(0.9);transform-origin:center top;">J:SL4.0ch10:64784716-64787438:+</div>
<div class="t" style="left:1013px;top:234.60px;font-size:11.2px;line-height:11.2px;color:#2e8b57;font-family:'Liberation Mono';transform:translateX(-50%) scaleX(0.9);transform-origin:center top;">J:SL4…</div>
<div class="t" style="left:1148px;top:234.60px;font-size:11.2px;line-height:11.2px;color:#2e8b57;font-family:'Liberation Mono';transform:translateX(-50%) scaleX(0.9);transform-origin:center top;">J:SL4.0…</div>
<div class="t" style="left:1273px;top:234.60px;font-size:11.2px;line-height:11.2px;color:#2e8b57;font-family:'Liberation Mono';transform:translateX(-50%) scaleX(0.9);transform-origin:center top;">J:SL4.0ch10:6478…</div>
<div class="t" style="left:1536px;top:234.60px;font-size:11.2px;line-height:11.2px;color:#2e8b57;font-family:'Liberation Mono';transform:translateX(-50%) scaleX(0.9);transform-origin:center top;">J:SL4.0ch10:64791247-64792677…</div>
<div class="t" style="left:285.03195311022876px;top:621.05px;font-size:12.6px;line-height:12.6px;color:#000;font-weight:700;font-family:'Liberation Mono';transform:scaleX(0.92);transform-origin:left top;">64,782,000</div>
<div class="t" style="left:410.7646057855927px;top:621.05px;font-size:12.6px;line-height:12.6px;color:#000;font-weight:700;font-family:'Liberation Mono';transform:scaleX(0.92);transform-origin:left top;">64,783,000</div>
<div class="t" style="left:536.4972584609567px;top:621.05px;font-size:12.6px;line-height:12.6px;color:#000;font-weight:700;font-family:'Liberation Mono';transform:scaleX(0.92);transform-origin:left top;">64,784,000</div>
<div class="t" style="left:662.2299111363207px;top:621.05px;font-size:12.6px;line-height:12.6px;color:#000;font-weight:700;font-family:'Liberation Mono';transform:scaleX(0.92);transform-origin:left top;">64,785,000</div>
<div class="t" style="left:787.9625638116846px;top:621.05px;font-size:12.6px;line-height:12.6px;color:#000;font-weight:700;font-family:'Liberation Mono';transform:scaleX(0.92);transform-origin:left top;">64,786,000</div>
<div class="t" style="left:913.6952164870486px;top:621.05px;font-size:12.6px;line-height:12.6px;color:#000;font-weight:700;font-family:'Liberation Mono';transform:scaleX(0.92);transform-origin:left top;">64,787,000</div>
<div class="t" style="left:1039.4278691624127px;top:621.05px;font-size:12.6px;line-height:12.6px;color:#000;font-weight:700;font-family:'Liberation Mono';transform:scaleX(0.92);transform-origin:left top;">64,788,000</div>
<div class="t" style="left:1165.1605218377765px;top:621.05px;font-size:12.6px;line-height:12.6px;color:#000;font-weight:700;font-family:'Liberation Mono';transform:scaleX(0.92);transform-origin:left top;">64,789,000</div>
<div class="t" style="left:1290.8931745131404px;top:621.05px;font-size:12.6px;line-height:12.6px;color:#000;font-weight:700;font-family:'Liberation Mono';transform:scaleX(0.92);transform-origin:left top;">64,790,000</div>
<div class="t" style="left:1416.6258271885044px;top:621.05px;font-size:12.6px;line-height:12.6px;color:#000;font-weight:700;font-family:'Liberation Mono';transform:scaleX(0.92);transform-origin:left top;">64,791,000</div>
<div class="t" style="left:1542.3584798638683px;top:621.05px;font-size:12.6px;line-height:12.6px;color:#000;font-weight:700;font-family:'Liberation Mono';transform:scaleX(0.92);transform-origin:left top;">64,792,000</div>
<div class="t" style="left:588px;top:649.94px;font-size:13.6px;line-height:13.6px;color:#1a1a1a;letter-spacing:0.4px;transform:translateX(-50%);">64,784,411</div>
<div class="a" style="left:53px;top:113px;width:240px;height:563px;background:#fff"></div>
<div class="a" style="left:293px;top:113px;width:8px;height:563px;background:#ececec"></div>
<div class="a" style="left:1632px;top:112px;width:14px;height:565px;background:#f6f6f6"></div>
<div class="a" style="left:51px;top:677px;width:1595px;height:15px;background:#f6f6f6"></div>
<div class="a" style="left:1628px;top:682px;width:18px;height:8px;background:#c2c2c2;border-radius:4px"></div>
<div class="a" style="left:22px;top:692px;width:1626px;height:9px;background:#fdfdfd;border-top:1px solid #e4e4e4;box-sizing:border-box"></div>
<div class="a" style="left:53px;top:114px;width:240px;height:79px;border:2px solid #0037ff;border-bottom-width:1px;border-left-width:1px;box-sizing:border-box"></div>
<div class="a" style="left:54px;top:116px;width:5px;height:76px;background:#ffff00"></div>
<svg class="a" style="left:58px;top:116px" width="12" height="19" viewBox="0 0 12 19"><path d="M3 9V5.5C3 2.5,4.5 1,6 1C7.5 1,9 2.5,9 5.5V9" fill="none" stroke="#0030c0" stroke-width="3"/><path d="M3 9V5.5C3 2.5,4.5 1,6 1C7.5 1,9 2.5,9 5.5V9" fill="none" stroke="#0040ff" stroke-width="1.6"/><rect x="0.5" y="8.5" width="11" height="10" fill="#0040ff" stroke="#0030c0" stroke-width="1"/><rect x="5.2" y="11.5" width="1.6" height="3.5" fill="#fff"/></svg>
<div class="t" style="left:169.5px;top:132.54px;font-size:12.3px;line-height:12.3px;color:#0a45ff;transform:translateX(-50%);">Find Junctions:</div>
<div class="t" style="left:169px;top:146.78px;font-size:13.2px;line-height:13.2px;color:#0a45ff;letter-spacing:0.45px;transform:translateX(-50%);">Malintka-R1-0hr-25C-self.bam (+|-)</div>
<div class="t" style="left:173px;top:161.28px;font-size:13.2px;line-height:13.2px;color:#0a45ff;letter-spacing:0.3px;transform:translateX(-50%);">(+|-)</div>
<div class="a" style="left:53px;top:194px;width:240px;height:79px;border:2px solid #2e8b57;border-bottom-width:1px;border-left-width:1px;box-sizing:border-box"></div>
<svg class="a" style="left:58px;top:196px" width="12" height="19" viewBox="0 0 12 19"><path d="M3 9V5.5C3 2.5,4.5 1,6 1C7.5 1,9 2.5,9 5.5V9" fill="none" stroke="#1e6b40" stroke-width="3"/><path d="M3 9V5.5C3 2.5,4.5 1,6 1C7.5 1,9 2.5,9 5.5V9" fill="none" stroke="#3a9a68" stroke-width="1.6"/><rect x="0.5" y="8.5" width="11" height="10" fill="#3a9a68" stroke="#1e6b40" stroke-width="1"/><rect x="5.2" y="11.5" width="1.6" height="3.5" fill="#fff"/></svg>
<div class="t" style="left:168.5px;top:219.78px;font-size:13.2px;line-height:13.2px;color:#2e8b57;letter-spacing:0.14px;transform:translateX(-50%);">Nagcarlang-R2-8hr-37C-self.FJ.bed</div>
<div class="t" style="left:173px;top:234.78px;font-size:13.2px;line-height:13.2px;color:#2e8b57;letter-spacing:0.3px;transform:translateX(-50%);">(+|-)</div>
<div class="a" style="left:53px;top:274px;width:240px;height:80px;border:2px solid #ff0000;box-sizing:border-box"></div>
<svg class="a" style="left:63px;top:276px" width="12" height="19" viewBox="0 0 12 19"><path d="M3 9V5.5C3 2.5,4.5 1,6 1C7.5 1,9 2.5,9 5.5V9" fill="none" stroke="#5a1a00" stroke-width="3"/><path d="M3 9V5.5C3 2.5,4.5 1,6 1C7.5 1,9 2.5,9 5.5V9" fill="none" stroke="#993300" stroke-width="1.6"/><rect x="0.5" y="8.5" width="11" height="10" fill="#993300" stroke="#5a1a00" stroke-width="1"/><rect x="5.2" y="11.5" width="1.6" height="3.5" fill="#fff"/></svg>
<div class="t" style="left:173px;top:309.78px;font-size:13.2px;line-height:13.2px;color:#993300;letter-spacing:0.28px;transform:translateX(-50%);">Malintka-R1-0hr-25C-self.FJ.bed (+|-)</div>
<div class="a" style="left:53px;top:354px;width:240px;height:240px;border:2px solid #0037ff;border-bottom-width:1px;border-left-width:1px;box-sizing:border-box"></div>
<div class="t" style="left:173px;top:470.78px;font-size:13.2px;line-height:13.2px;color:#0a45ff;letter-spacing:0.45px;transform:translateX(-50%);">Malintka-R1-0hr-25C-self.bam (+|-)</div>
<div class="a" style="left:53px;top:595px;width:240px;height:12px;border:2px solid #000;border-bottom-width:1px;box-sizing:border-box;overflow:hidden"><div style="position:absolute;left:0;width:236px;text-align:center;top:-2px;font-size:15px;line-height:15px;color:#222">ITAG4.0 (+)</div></div>
<div class="a" style="left:53px;top:608px;width:240px;height:53px;border:2px solid #000;border-bottom-width:1px;box-sizing:border-box"></div>
<div class="t" style="left:173px;top:632.12px;font-size:12.8px;line-height:12.8px;color:#111;transform:translateX(-50%);">Coordinates</div>
<div class="a" style="left:53px;top:662px;width:240px;height:12px;border:2px solid #000;border-bottom-width:1px;box-sizing:border-box;overflow:hidden"><div style="position:absolute;left:0;width:236px;text-align:center;top:-1px;font-size:15px;line-height:15px;color:#222">ITAG4.0 (–)</div></div>
<div class="a" style="left:53px;top:674px;width:240px;height:2px;background:#fff;border-bottom:1px solid #000;box-sizing:border-box"></div>
<div class="a" style="left:243px;top:112px;width:7px;height:565px;background:#404040"></div>
<div class="a" style="left:293px;top:390px;width:8px;height:10px;background:#fff;border-top:1px solid #d2d2d2;border-bottom:1px solid #d2d2d2;box-sizing:border-box"></div>
<div class="a" style="left:294px;top:392px;width:6px;height:6px;background:#e2e2e2;border-radius:50%"></div>
<div class="a" style="left:831px;top:694px;width:6px;height:6px;background:#e2e2e2;border-radius:50%"></div>
<div class="a" style="left:1651px;top:502px;width:8px;height:10px;background:#fff;border-top:1px solid #d2d2d2;border-bottom:1px solid #d2d2d2;box-sizing:border-box"></div>
<div class="a" style="left:1652px;top:504px;width:6px;height:6px;background:#e2e2e2;border-radius:50%"></div>
<div class="a" style="left:31px;top:717px;width:1608px;height:205px;background:#ececec;border:1px solid #d8d8d8;border-radius:5px;box-sizing:border-box"></div>
<div class="a" style="left:32px;top:718px;width:1606px;height:16px;background:#e3e3e3;border-radius:4px 4px 0 0"></div>
<div class="a" style="left:408px;top:705px;width:852px;height:22px;background:#e2e2e2;border:1px solid #cfcfcf;border-radius:5px;box-sizing:border-box;box-shadow:inset 0 1px 0 rgba(255,255,255,0.4)"></div>
<svg class="a" style="left:421px;top:708px" width="14" height="18" viewBox="0 0 14 18"><path d="M1.5 5l5.5 5 5.5-5v3l-5.5 5-5.5-5z" fill="#3a9be0"/><rect x="2" y="15" width="10" height="1" fill="#c8c8c8"/></svg>
<div class="a" style="left:550px;top:706px;width:90px;height:20px;background:#fff;border-radius:5px;box-shadow:0 0.5px 1.5px rgba(0,0,0,0.3)"></div>
<div class="a" style="left:448px;top:710px;width:1px;height:12px;background:#c4c4c4"></div>
<div class="a" style="left:701px;top:710px;width:1px;height:12px;background:#c4c4c4"></div>
<div class="a" style="left:830px;top:710px;width:1px;height:12px;background:#c4c4c4"></div>
<div class="a" style="left:939px;top:710px;width:1px;height:12px;background:#c4c4c4"></div>
<div class="a" style="left:1034px;top:710px;width:1px;height:12px;background:#c4c4c4"></div>
<div class="a" style="left:1078px;top:710px;width:1px;height:12px;background:#c4c4c4"></div>
<div class="a" style="left:1183px;top:710px;width:1px;height:12px;background:#c4c4c4"></div>
<div class="t" style="left:461px;top:708.88px;font-size:13.67px;line-height:13.67px;color:#111;">Data Access</div>
<div class="t" style="left:562px;top:709.47px;font-size:13.8px;line-height:13.8px;color:#f7f7f7;-webkit-text-stroke:0.5px #c4c4c4;">Annotation</div>
<div class="t" style="left:654px;top:709.49px;font-size:12.95px;line-height:12.95px;color:#111;">Graph</div>
<div class="t" style="left:714px;top:709.20px;font-size:13.3px;line-height:13.3px;color:#111;">Advanced Search</div>
<div class="t" style="left:843px;top:708.57px;font-size:14.03px;line-height:14.03px;color:#111;">Selection Info</div>
<div class="t" style="left:952px;top:708.95px;font-size:13.59px;line-height:13.59px;color:#111;">Sliced View</div>
<div class="t" style="left:1045px;top:708.78px;font-size:13.79px;line-height:13.79px;color:#111;">Log</div>
<div class="t" style="left:1091px;top:708.79px;font-size:13.78px;line-height:13.78px;color:#111;">External View</div>
<div class="t" style="left:1198px;top:708.03px;font-size:14.67px;line-height:14.67px;color:#111;">Plug-ins</div>
<div class="a" style="left:40px;top:738px;width:88px;height:20px;background:#fff;border-radius:4px;box-shadow:0 0.5px 1.5px rgba(0,0,0,0.35);"></div>
<div class="t" style="left:84.0px;top:740.97px;font-size:13.8px;line-height:13.8px;color:#111;transform:translateX(-50%);">Select All</div>
<div class="a" style="left:142px;top:738px;width:101px;height:20px;background:#fff;border-radius:4px;box-shadow:0 0.5px 1.5px rgba(0,0,0,0.35);"></div>
<div class="t" style="left:192.5px;top:740.97px;font-size:13.8px;line-height:13.8px;color:#111;transform:translateX(-50%);">Clear Track</div>
<div class="a" style="left:256px;top:738px;width:98px;height:20px;background:#fff;border-radius:4px;box-shadow:0 0.5px 1.5px rgba(0,0,0,0.35);"></div>
<div class="t" style="left:305.0px;top:740.97px;font-size:13.8px;line-height:13.8px;color:#111;transform:translateX(-50%);">Save Track</div>
<div class="a" style="left:368px;top:738px;width:109px;height:20px;background:#fff;border-radius:4px;box-shadow:0 0.5px 1.5px rgba(0,0,0,0.35);"></div>
<div class="t" style="left:422.5px;top:740.97px;font-size:13.8px;line-height:13.8px;color:#111;transform:translateX(-50%);">Delete Track</div>
<div class="a" style="left:491px;top:738px;width:127px;height:20px;background:#fff;border-radius:4px;box-shadow:0 0.5px 1.5px rgba(0,0,0,0.35);"></div>
<div class="t" style="left:554.5px;top:740.97px;font-size:13.8px;line-height:13.8px;color:#111;transform:translateX(-50%);">Restore Default</div>
<div class="a" style="left:632px;top:738px;width:131px;height:20px;background:#fff;border-radius:4px;box-shadow:0 0.5px 1.5px rgba(0,0,0,0.35);"></div>
<div class="t" style="left:697.5px;top:740.97px;font-size:13.8px;line-height:13.8px;color:#111;transform:translateX(-50%);">Other Options...</div>
<div class="a" style="left:35px;top:771px;width:125px;height:142px;border:1px solid #b8b8b8;box-sizing:border-box"></div>
<div class="a" style="left:40px;top:769px;width:34px;height:5px;background:#ececec"></div>
<div class="t" style="left:42px;top:765.34px;font-size:13.6px;line-height:13.6px;color:#111;">Style</div>
<div class="a" style="left:45px;top:783px;width:18px;height:15px;background:#fff;border:1px solid #cfcfcf;box-sizing:border-box"></div>
<div class="a" style="left:47px;top:785px;width:14px;height:11px;background:#993300;"></div>
<div class="t" style="left:69px;top:785.17px;font-size:13.8px;line-height:13.8px;color:#111;">Foreground</div>
<div class="a" style="left:45px;top:811px;width:18px;height:15px;background:#fff;border:1px solid #cfcfcf;box-sizing:border-box"></div>
<div class="a" style="left:47px;top:813px;width:14px;height:11px;background:#ffffff;border:1px solid #777;box-sizing:border-box"></div>
<div class="t" style="left:69px;top:813.17px;font-size:13.8px;line-height:13.8px;color:#111;">Background</div>
<div class="a" style="left:45px;top:839px;width:18px;height:15px;background:#fff;border:1px solid #cfcfcf;box-sizing:border-box"></div>
<div class="a" style="left:47px;top:841px;width:14px;height:11px;background:#993300;"></div>
<div class="t" style="left:69px;top:841.17px;font-size:13.8px;line-height:13.8px;color:#111;">Track Label</div>
<div class="t" style="left:44px;top:866.67px;font-size:13.8px;line-height:13.8px;color:#111;">Track Label Font:</div>
<div class="a" style="left:48px;top:885px;width:98px;height:19px;background:#fff;border-radius:4px;box-shadow:0 0.5px 1.5px rgba(0,0,0,0.35);"></div>
<div class="t" style="left:62px;top:888.42px;font-size:13.5px;line-height:13.5px;color:#111;">12</div>
<svg class="a" style="left:128px;top:887px" width="16" height="16" viewBox="0 0 16 16"><rect x="0" y="0" width="16" height="16" rx="3" fill="#e0202c"/><path d="M5 6.5 L8 3.5 L11 6.5 M5 9.5 L8 12.5 L11 9.5" stroke="#fff" stroke-width="1.6" fill="none" stroke-linecap="round" stroke-linejoin="round"/></svg>
<div class="a" style="left:165px;top:771px;width:236px;height:42px;border:1px solid #b8b8b8;box-sizing:border-box"></div>
<div class="a" style="left:170px;top:769px;width:84px;height:5px;background:#ececec"></div>
<div class="t" style="left:172px;top:765.34px;font-size:13.6px;line-height:13.6px;color:#111;">Stack Height</div>
<div class="a" style="left:172px;top:785px;width:56px;height:19px;background:#fff;border-bottom:1px solid #c4c4c4;box-sizing:border-box"></div>
<div class="t" style="left:225px;top:788.17px;font-size:13.8px;line-height:13.8px;color:#111;transform:translateX(-100%);">3</div>
<div class="a" style="left:238px;top:785px;width:52px;height:20px;background:#fff;border-radius:4px;box-shadow:0 0.5px 1.5px rgba(0,0,0,0.35);"></div>
<div class="t" style="left:264px;top:788.67px;font-size:13.8px;line-height:13.8px;color:#111;transform:translateX(-50%);">Go</div>
<div class="a" style="left:303px;top:785px;width:88px;height:20px;background:#fff;border-radius:4px;box-shadow:0 0.5px 1.5px rgba(0,0,0,0.35);"></div>
<div class="t" style="left:347px;top:788.67px;font-size:13.8px;line-height:13.8px;color:#111;transform:translateX(-50%);">Optimize</div>
<div class="a" style="left:165px;top:824px;width:219px;height:89px;border:1px solid #b8b8b8;box-sizing:border-box"></div>
<div class="a" style="left:171px;top:822px;width:84px;height:5px;background:#ececec"></div>
<div class="t" style="left:173px;top:818.34px;font-size:13.6px;line-height:13.6px;color:#111;">Track Height</div>
<svg class="a" style="left:176px;top:839px" width="14" height="14" viewBox="0 0 14 14"><rect x="0" y="0" width="14" height="14" rx="3" fill="#e3262e"/><path d="M3.2 7.2l2.6 2.8 5-6.2" stroke="#fff" stroke-width="2" fill="none" stroke-linecap="round" stroke-linejoin="round"/></svg>
<div class="t" style="left:196px;top:839.20px;font-size:14.0px;line-height:14.0px;color:#111;">Lock Track Height (Pixels)</div>
<div class="t" style="left:174px;top:864.17px;font-size:13.8px;line-height:13.8px;color:#111;">Set Height (Pixels):</div>
<div class="a" style="left:177px;top:882px;width:56px;height:19px;background:#fff;border-bottom:1px solid #c4c4c4;box-sizing:border-box"></div>
<div class="t" style="left:230px;top:885.17px;font-size:13.8px;line-height:13.8px;color:#111;transform:translateX(-100%);">80</div>
<div class="a" style="left:243px;top:881px;width:51px;height:20px;background:#fff;border-radius:4px;box-shadow:0 0.5px 1.5px rgba(0,0,0,0.35);"></div>
<div class="t" style="left:268px;top:885.17px;font-size:13.8px;line-height:13.8px;color:#111;transform:translateX(-50%);">Go</div>
<div class="a" style="left:406px;top:771px;width:241px;height:142px;border:1px solid #b8b8b8;box-sizing:border-box"></div>
<div class="a" style="left:411px;top:769px;width:114px;height:5px;background:#ececec"></div>
<div class="t" style="left:413px;top:765.34px;font-size:13.6px;line-height:13.6px;color:#111;">Labels and Strand</div>
<div class="t" style="left:430px;top:787.17px;font-size:13.8px;line-height:13.8px;color:#111;">Label Field:</div>
<div class="a" style="left:506px;top:783px;width:132px;height:20px;background:#fff;border-radius:4px;box-shadow:0 0.5px 1.5px rgba(0,0,0,0.35);"></div>
<div class="t" style="left:518px;top:786.67px;font-size:13.8px;line-height:13.8px;color:#111;">id</div>
<svg class="a" style="left:620px;top:785px" width="16" height="16" viewBox="0 0 16 16"><rect x="0" y="0" width="16" height="16" rx="3" fill="#e0202c"/><path d="M5 6.5 L8 3.5 L11 6.5 M5 9.5 L8 12.5 L11 9.5" stroke="#fff" stroke-width="1.6" fill="none" stroke-linecap="round" stroke-linejoin="round"/></svg>
<div class="t" style="left:430px;top:825.17px;font-size:13.8px;line-height:13.8px;color:#111;">Strand:</div>
<svg class="a" style="left:437px;top:846px" width="14" height="14" viewBox="0 0 14 14"><rect x="0" y="0" width="14" height="14" rx="3" fill="#e3262e"/><path d="M3.2 7.2l2.6 2.8 5-6.2" stroke="#fff" stroke-width="2" fill="none" stroke-linecap="round" stroke-linejoin="round"/></svg>
<div class="t" style="left:457px;top:846.67px;font-size:13.8px;line-height:13.8px;color:#111;letter-spacing:0.8px;">+/-</div>
<div class="a" style="left:506px;top:846px;width:14px;height:14px;background:#fff;border-radius:3px;box-shadow:0 0 0 0.6px #b0b0b0, 0 0.5px 1px rgba(0,0,0,0.2)"></div>
<div class="t" style="left:526px;top:846.67px;font-size:13.8px;line-height:13.8px;color:#111;">Arrow</div>
<div class="a" style="left:437px;top:874px;width:14px;height:14px;background:#fff;border-radius:3px;box-shadow:0 0 0 0.6px #b0b0b0, 0 0.5px 1px rgba(0,0,0,0.2)"></div>
<div class="t" style="left:457px;top:875.17px;font-size:13.8px;line-height:13.8px;color:#111;">Color by Strand:</div>
<div class="a" style="left:461px;top:892px;width:19px;height:17px;background:#fff"></div>
<svg class="a" style="left:462px;top:894px" width="14" height="12" viewBox="0 0 14 12"><rect x="0.5" y="0.5" width="13" height="11" fill="#fff" stroke="#9a9a9a"/><rect x="2" y="2" width="3" height="3" fill="#ccc"/><rect x="8" y="2" width="3" height="3" fill="#ccc"/><rect x="5" y="5" width="3" height="3" fill="#ccc"/><rect x="2" y="8" width="3" height="3" fill="#ccc"/><rect x="8" y="8" width="3" height="3" fill="#ccc"/></svg>
<div class="t" style="left:481px;top:896.85px;font-size:13px;line-height:13px;color:#8a8a8a;">+</div>
<div class="a" style="left:508px;top:892px;width:19px;height:17px;background:#fff"></div>
<svg class="a" style="left:509px;top:894px" width="14" height="12" viewBox="0 0 14 12"><rect x="0.5" y="0.5" width="13" height="11" fill="#fff" stroke="#9a9a9a"/><rect x="2" y="2" width="3" height="3" fill="#ccc"/><rect x="8" y="2" width="3" height="3" fill="#ccc"/><rect x="5" y="5" width="3" height="3" fill="#ccc"/><rect x="2" y="8" width="3" height="3" fill="#ccc"/><rect x="8" y="8" width="3" height="3" fill="#ccc"/></svg>
<div class="t" style="left:528px;top:896.85px;font-size:13px;line-height:13px;color:#8a8a8a;">–</div>
<div class="a" style="left:652px;top:771px;width:188px;height:142px;border:1px solid #b8b8b8;box-sizing:border-box"></div>
<div class="a" style="left:657px;top:769px;width:72px;height:5px;background:#ececec"></div>
<div class="t" style="left:659px;top:765.34px;font-size:13.6px;line-height:13.6px;color:#111;">Operations</div>
<div class="t" style="left:656px;top:783.17px;font-size:13.8px;line-height:13.8px;color:#111;">Single-Track:</div>
<div class="a" style="left:661px;top:800px;width:99px;height:20px;background:#fff;border-radius:4px;box-shadow:0 0.5px 1.5px rgba(0,0,0,0.35);"></div>
<div class="t" style="left:673px;top:804.17px;font-size:13.8px;line-height:13.8px;color:#111;">Copy</div>
<svg class="a" style="left:742px;top:802px" width="16" height="16" viewBox="0 0 16 16"><rect x="0" y="0" width="16" height="16" rx="3" fill="#e0202c"/><path d="M5 6.5 L8 3.5 L11 6.5 M5 9.5 L8 12.5 L11 9.5" stroke="#fff" stroke-width="1.6" fill="none" stroke-linecap="round" stroke-linejoin="round"/></svg>
<div class="a" style="left:773px;top:800px;width:47px;height:21px;background:#fff;border-radius:4px;box-shadow:0 0.5px 1.5px rgba(0,0,0,0.35);"></div>
<div class="t" style="left:796.5px;top:804.17px;font-size:13.8px;line-height:13.8px;color:#111;transform:translateX(-50%);">Go</div>
<div class="t" style="left:656px;top:838.17px;font-size:13.8px;line-height:13.8px;color:#111;">Multi-Track:</div>
<div class="a" style="left:661px;top:855px;width:99px;height:20px;background:#f3f3f3;border-radius:4px;box-shadow:0 0.5px 1px rgba(0,0,0,0.2);"></div>
<svg class="a" style="left:743px;top:857px" width="12" height="16" viewBox="0 0 12 16"><path d="M3 6l3-3 3 3M3 10l3 3 3-3" stroke="#9a9a9a" stroke-width="1.3" fill="none"/></svg>
<div class="a" style="left:773px;top:855px;width:47px;height:21px;background:#f3f3f3;border-radius:4px;box-shadow:0 0.5px 1px rgba(0,0,0,0.2);"></div>
<div class="t" style="left:796.5px;top:859.17px;font-size:13.8px;line-height:13.8px;color:#9a9a9a;transform:translateX(-50%);">Go</div>
<div class="a" style="left:1667px;top:83px;width:111px;height:0px;"></div>
<div class="a" style="left:1667px;top:83px;width:218px;height:843px;background:#e6e6e6;border-radius:7px"></div>
<div class="a" style="left:1672px;top:86px;width:198px;height:838px;background:#ececec"></div>
<div class="a" style="left:1674px;top:94px;width:192px;height:44px;border:1px solid #b4b4b4;box-sizing:border-box"></div>
<div class="a" style="left:1682px;top:90px;width:58px;height:8px;background:#ececec"></div>
<div class="t" style="left:1685px;top:88.11px;font-size:13.4px;line-height:13.4px;color:#0000ee;font-weight:700;text-decoration:underline;">Species</div>
<div class="a" style="left:1683px;top:110px;width:174px;height:20px;background:#fff;border-radius:4px;box-shadow:0 0.5px 1.5px rgba(0,0,0,0.35);"></div>
<div class="t" style="left:1691px;top:113.10px;font-size:14.0px;line-height:14.0px;color:#111;">Solanum lycopersicum</div>
<svg class="a" style="left:1839px;top:112px" width="16" height="16" viewBox="0 0 16 16"><rect x="0" y="0" width="16" height="16" rx="3" fill="#e0202c"/><path d="M5 6.5 L8 3.5 L11 6.5 M5 9.5 L8 12.5 L11 9.5" stroke="#fff" stroke-width="1.6" fill="none" stroke-linecap="round" stroke-linejoin="round"/></svg>
<div class="a" style="left:1674px;top:154px;width:192px;height:41px;border:1px solid #b4b4b4;box-sizing:border-box"></div>
<div class="a" style="left:1679px;top:148px;width:106px;height:10px;background:#ececec"></div>
<div class="t" style="left:1681px;top:148.48px;font-size:13.55px;line-height:13.55px;color:#111;">Genome Version</div>
<div class="a" style="left:1683px;top:167px;width:174px;height:20px;background:#fff;border-radius:4px;box-shadow:0 0.5px 1.5px rgba(0,0,0,0.35);"></div>
<div class="t" style="left:1691px;top:170.19px;font-size:13.9px;line-height:13.9px;color:#111;">S_lycopersicum_Sep...</div>
<svg class="a" style="left:1839px;top:169px" width="16" height="16" viewBox="0 0 16 16"><rect x="0" y="0" width="16" height="16" rx="3" fill="#e0202c"/><path d="M5 6.5 L8 3.5 L11 6.5 M5 9.5 L8 12.5 L11 9.5" stroke="#fff" stroke-width="1.6" fill="none" stroke-linecap="round" stroke-linejoin="round"/></svg>
<div class="a" style="left:1672px;top:204px;width:197px;height:721px;background:#fff;border:1px solid #8c8c8c;box-sizing:border-box"></div>
<div class="a" style="left:1673px;top:205px;width:195px;height:17px;background:linear-gradient(#fbfbfb,#ededed);border-bottom:2px solid #222;box-sizing:border-box"></div>
<div class="a" style="left:1770px;top:205px;width:1px;height:17px;background:#c8c8c8"></div>
<div class="t" style="left:1678px;top:207.79px;font-size:12.6px;line-height:12.6px;color:#111;font-weight:700;">(13) Sequenc...</div>
<div class="t" style="left:1819px;top:207.28px;font-size:13.2px;line-height:13.2px;color:#111;font-weight:700;transform:translateX(-50%);">Length</div>
<div class="a" style="left:1673px;top:222px;width:195px;height:20px;background:#e8e8e8"></div>
<div class="t" style="left:1721.5px;top:226.62px;font-size:12.8px;line-height:12.8px;color:#111;transform:translateX(-50%);">SL4.0ch01</div>
<div class="t" style="left:1818px;top:226.28px;font-size:13.2px;line-height:13.2px;color:#111;letter-spacing:1.0px;transform:translateX(-50%);">90863682</div>
<div class="a" style="left:1673px;top:242px;width:195px;height:20px;background:#e8e8e8"></div>
<div class="t" style="left:1721.5px;top:246.62px;font-size:12.8px;line-height:12.8px;color:#111;transform:translateX(-50%);">SL4.0ch02</div>
<div class="t" style="left:1818px;top:246.28px;font-size:13.2px;line-height:13.2px;color:#111;letter-spacing:1.0px;transform:translateX(-50%);">53473368</div>
<div class="a" style="left:1673px;top:262px;width:195px;height:20px;background:#e8e8e8"></div>
<div class="t" style="left:1721.5px;top:266.62px;font-size:12.8px;line-height:12.8px;color:#111;transform:translateX(-50%);">SL4.0ch03</div>
<div class="t" style="left:1818px;top:266.28px;font-size:13.2px;line-height:13.2px;color:#111;letter-spacing:1.0px;transform:translateX(-50%);">65298490</div>
<div class="a" style="left:1673px;top:282px;width:195px;height:20px;background:#e8e8e8"></div>
<div class="t" style="left:1721.5px;top:286.62px;font-size:12.8px;line-height:12.8px;color:#111;transform:translateX(-50%);">SL4.0ch04</div>
<div class="t" style="left:1818px;top:286.28px;font-size:13.2px;line-height:13.2px;color:#111;letter-spacing:1.0px;transform:translateX(-50%);">64459972</div>
<div class="a" style="left:1673px;top:302px;width:195px;height:20px;background:#e8e8e8"></div>
<div class="t" style="left:1721.5px;top:306.62px;font-size:12.8px;line-height:12.8px;color:#111;transform:translateX(-50%);">SL4.0ch05</div>
<div class="t" style="left:1818px;top:306.28px;font-size:13.2px;line-height:13.2px;color:#111;letter-spacing:1.0px;transform:translateX(-50%);">65269487</div>
<div class="a" style="left:1673px;top:322px;width:195px;height:20px;background:#e8e8e8"></div>
<div class="t" style="left:1721.5px;top:326.62px;font-size:12.8px;line-height:12.8px;color:#111;transform:translateX(-50%);">SL4.0ch06</div>
<div class="t" style="left:1818px;top:326.28px;font-size:13.2px;line-height:13.2px;color:#111;letter-spacing:1.0px;transform:translateX(-50%);">47258699</div>
<div class="a" style="left:1673px;top:342px;width:195px;height:20px;background:#e8e8e8"></div>
<div class="t" style="left:1721.5px;top:346.62px;font-size:12.8px;line-height:12.8px;color:#111;transform:translateX(-50%);">SL4.0ch07</div>
<div class="t" style="left:1818px;top:346.28px;font-size:13.2px;line-height:13.2px;color:#111;letter-spacing:1.0px;transform:translateX(-50%);">67883646</div>
<div class="a" style="left:1673px;top:362px;width:195px;height:20px;background:#e8e8e8"></div>
<div class="t" style="left:1721.5px;top:366.62px;font-size:12.8px;line-height:12.8px;color:#111;transform:translateX(-50%);">SL4.0ch08</div>
<div class="t" style="left:1818px;top:366.28px;font-size:13.2px;line-height:13.2px;color:#111;letter-spacing:1.0px;transform:translateX(-50%);">63995357</div>
<div class="a" style="left:1673px;top:382px;width:195px;height:20px;background:#e8e8e8"></div>
<div class="t" style="left:1721.5px;top:386.62px;font-size:12.8px;line-height:12.8px;color:#111;transform:translateX(-50%);">SL4.0ch09</div>
<div class="t" style="left:1818px;top:386.28px;font-size:13.2px;line-height:13.2px;color:#111;letter-spacing:1.0px;transform:translateX(-50%);">68513564</div>
<div class="a" style="left:1673px;top:402px;width:195px;height:20px;background:#b0131d"></div>
<div class="t" style="left:1721.5px;top:406.62px;font-size:12.8px;line-height:12.8px;color:#fff;transform:translateX(-50%);">SL4.0ch10</div>
<div class="t" style="left:1818px;top:406.28px;font-size:13.2px;line-height:13.2px;color:#fff;letter-spacing:1.0px;transform:translateX(-50%);">64792705</div>
<div class="a" style="left:1673px;top:422px;width:195px;height:20px;background:#e8e8e8"></div>
<div class="t" style="left:1721.5px;top:426.62px;font-size:12.8px;line-height:12.8px;color:#111;transform:translateX(-50%);">SL4.0ch11</div>
<div class="t" style="left:1818px;top:426.28px;font-size:13.2px;line-height:13.2px;color:#111;letter-spacing:1.0px;transform:translateX(-50%);">54379777</div>
<div class="a" style="left:1673px;top:442px;width:195px;height:20px;background:#e8e8e8"></div>
<div class="t" style="left:1721.5px;top:446.62px;font-size:12.8px;line-height:12.8px;color:#111;transform:translateX(-50%);">SL4.0ch12</div>
<div class="t" style="left:1818px;top:446.28px;font-size:13.2px;line-height:13.2px;color:#111;letter-spacing:1.0px;transform:translateX(-50%);">66688036</div>
<div class="a" style="left:1673px;top:462px;width:195px;height:20px;background:#e8e8e8"></div>
<div class="t" style="left:1721.5px;top:466.62px;font-size:12.8px;line-height:12.8px;color:#111;transform:translateX(-50%);">SL4.0ch00</div>
<div class="t" style="left:1818px;top:466.28px;font-size:13.2px;line-height:13.2px;color:#111;letter-spacing:1.0px;transform:translateX(-50%);">9643250</div>
<div class="a" style="left:1673px;top:482px;width:195px;height:20px;background:#e8e8e8"></div>
<div class="t" style="left:1721.5px;top:486.62px;font-size:12.8px;line-height:12.8px;color:#111;transform:translateX(-50%);">genome</div>
<svg class="a" style="left:0;top:0" width="1920" height="975" shape-rendering="crispEdges"><path d="M1673 242h195v1h-195zM1673 262h195v1h-195zM1673 282h195v1h-195zM1673 302h195v1h-195zM1673 322h195v1h-195zM1673 342h195v1h-195zM1673 362h195v1h-195zM1673 382h195v1h-195zM1673 402h195v1h-195zM1673 422h195v1h-195zM1673 442h195v1h-195zM1673 462h195v1h-195zM1673 482h195v1h-195zM1673 502h195v1h-195zM1673 522h195v1h-195zM1673 542h195v1h-195zM1673 562h195v1h-195zM1673 582h195v1h-195zM1673 602h195v1h-195zM1673 622h195v1h-195zM1673 642h195v1h-195zM1673 662h195v1h-195zM1673 682h195v1h-195zM1673 702h195v1h-195zM1673 722h195v1h-195zM1673 742h195v1h-195zM1673 762h195v1h-195zM1673 782h195v1h-195zM1673 802h195v1h-195zM1673 822h195v1h-195zM1673 842h195v1h-195zM1673 862h195v1h-195zM1673 882h195v1h-195zM1673 902h195v1h-195zM1673 922h195v1h-195zM1770 222h1v702h-1z" fill="#a8a8a8"/></svg>
<div class="a" style="left:1672px;top:922px;width:197px;height:3px;border-top:1px solid #8c8c8c;border-bottom:1px solid #8c8c8c;background:#fff;box-sizing:border-box"></div>
<div class="a" style="left:1869px;top:204px;width:16px;height:721px;background:#e3e3e3;border-radius:0 0 6px 0"></div>
<div class="a" style="left:1876px;top:313px;width:22px;height:383px;background:#e0e0e0;border-radius:6px"></div>
<div class="a" style="left:1877px;top:451px;width:21px;height:122px;background:#fff;border-radius:6px;box-shadow:0 0.5px 1px rgba(0,0,0,0.2)"></div>
<svg class="a" style="left:1880px;top:327px" width="14" height="16" viewBox="0 0 14 16"><path d="M4 2l6 6-6 6v-3l3-3-3-3z" fill="#3a9be0"/></svg>
<div class="t" style="left:1887px;top:403px;font-size:13.6px;line-height:14px;color:#111;transform:translate(-50%,-50%) rotate(90deg)">Bookmarks</div>
<div class="t" style="left:1887px;top:512px;font-size:13.6px;line-height:14px;color:#d6d6d6;transform:translate(-50%,-50%) rotate(90deg)">Current Genome</div>
<div class="t" style="left:1887px;top:636px;font-size:13.6px;line-height:14px;color:#111;transform:translate(-50%,-50%) rotate(90deg)">Restriction Sites</div>
<div class="a" style="left:1705px;top:955px;width:199px;height:20px;border:1px solid #a0a0a0;border-bottom:none;box-sizing:border-box;background:#ececec"></div>
<svg class="a" style="left:1707px;top:958px" width="12" height="16" viewBox="0 0 12 16"><rect x="1" y="2" width="10" height="1.6" fill="#222"/><rect x="4" y="0.5" width="4" height="2" fill="#222"/><path d="M2 4.5h8l-0.7 10.5h-6.6z" fill="#222"/><path d="M4 6v8M6 6v8M8 6v8" stroke="#ddd" stroke-width="0.7"/></svg>
<div class="a" style="left:1723px;top:957px;width:23px;height:18px;background:#e8e6b0"></div>
<div class="a" style="left:1746px;top:957px;width:1px;height:18px;background:#888"></div>
<div class="t" style="left:1765px;top:958.51px;font-size:14.1px;line-height:14.1px;color:#111;">241M of 1820M</div>
</body></html>
